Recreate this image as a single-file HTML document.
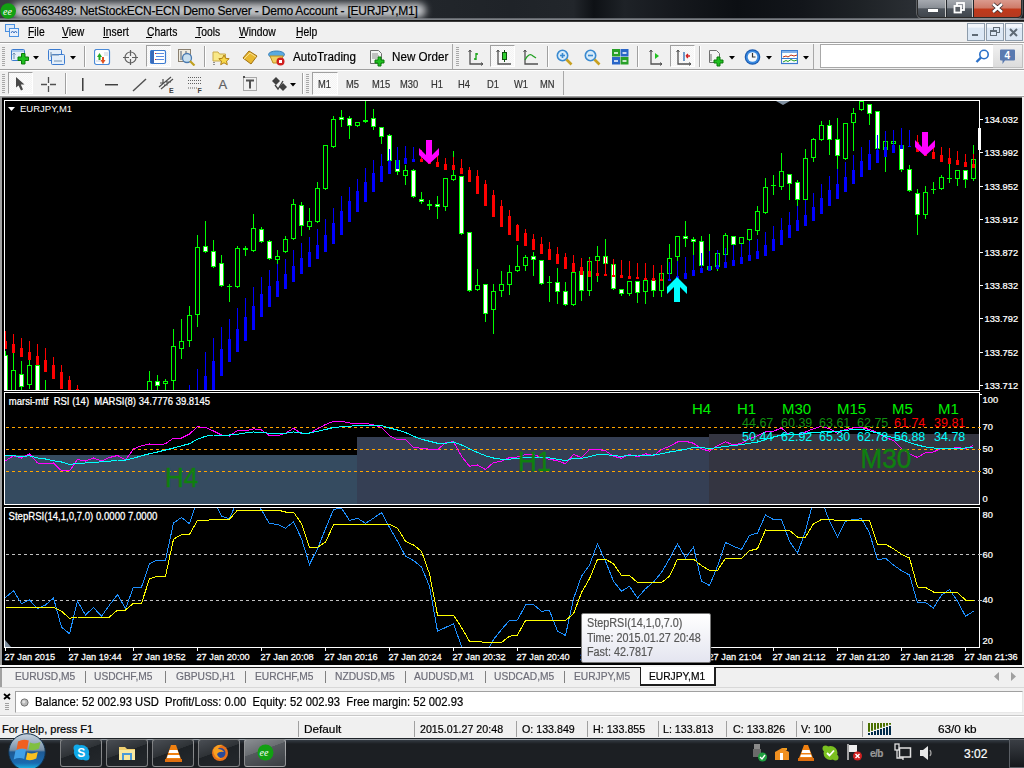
<!DOCTYPE html>
<html><head><meta charset="utf-8">
<style>
*{margin:0;padding:0;box-sizing:border-box}
html,body{width:1024px;height:768px;overflow:hidden;background:#f0f0f0;font-family:"Liberation Sans",sans-serif;font-size:12px;color:#000}
.a{position:absolute}
.t{position:absolute;white-space:pre;line-height:normal;-webkit-text-stroke:0.2px currentColor}
#title{left:0;top:0;width:1024px;height:21px;background:linear-gradient(90deg,#2a2d31 0%,#15181c 30%,#1c2026 60%,#2b2f35 75%,#15181c 90%,#1a1d22 100%)}

</style></head><body>
<div class="a" style="left:0;top:0;width:1024px;height:20px;background:linear-gradient(90deg,#3a3d42 0%,#2a2d32 20%,#22262b 41%,#1f2328 50%,#22262b 56%,#0e1115 58%,#1e2227 61%,#15181d 66%,#0c0f13 72%,#12151a 78%,#1e2226 84%,#2a2e33 89%,#1a1d22 100%)"></div>
<div class="a" style="left:12px;top:3px;width:414px;height:15px;background:rgba(205,207,210,0.92);border-radius:8px;filter:blur(3.5px)"></div>
<div class="a" style="left:0;top:18px;width:1024px;height:2px;background:linear-gradient(180deg,rgba(120,124,130,.6),rgba(150,154,160,.9))"></div>
<div class="a" style="left:0;top:20px;width:1024px;height:1px;background:#141414"></div>
<div class="a" style="left:0;top:21px;width:1024px;height:1px;background:#3a3a3a"></div>
<svg class="a" style="left:0;top:3px" width="17" height="17" viewBox="0 0 17 17"><circle cx="8.2" cy="8" r="7.8" fill="#12a012"/><text x="3" y="11.5" font-family="Liberation Serif" font-style="italic" font-size="10" fill="#fff">ee</text></svg>
<div class="t" style="left:21.6px;top:3.74px;font-size:12px;color:#000;letter-spacing:-0.2px">65063489: NetStockECN-ECN Demo Server - Demo Account - [EURJPY,M1]</div>
<div class="a" style="left:917px;top:-2px;width:105px;height:20px;border:1px solid #2a2a2a;border-radius:0 0 5px 5px;overflow:hidden;box-shadow:0 0 0 1px rgba(255,255,255,.25)"><div class="a" style="left:0;top:0;width:28px;height:19px;background:linear-gradient(180deg,#a9adb3 0%,#8a8f96 45%,#4e545c 52%,#3e434a 100%);border-right:1px solid #c8c8c8"></div><div class="a" style="left:29px;top:0;width:26px;height:19px;background:linear-gradient(180deg,#a9adb3 0%,#8a8f96 45%,#4e545c 52%,#3e434a 100%);border-right:1px solid #c8c8c8"></div><div class="a" style="left:56px;top:0;width:49px;height:19px;background:linear-gradient(180deg,#dc9e92 0%,#cf7c6a 45%,#c0391b 55%,#b23a22 100%)"></div></div>
<div class="a" style="left:928px;top:9px;width:10px;height:3px;background:#fff;box-shadow:0 0 1px #333"></div>
<svg class="a" style="left:953px;top:2px" width="13" height="12"><rect x="4" y="1" width="7" height="7" fill="none" stroke="#fff" stroke-width="1.8"/><rect x="1.5" y="4" width="6.5" height="6.5" fill="#5a5f66" stroke="#fff" stroke-width="1.8"/></svg>
<svg class="a" style="left:991px;top:2px" width="13" height="12"><path d="M2 2 L11 10 M11 2 L2 10" stroke="#3a2a2a" stroke-width="4"/><path d="M2 2 L11 10 M11 2 L2 10" stroke="#fff" stroke-width="2.4"/></svg>
<div class="a" style="left:0;top:22px;width:1024px;height:20px;background:#f0f0f0"></div>
<div class="a" style="left:0;top:42px;width:1024px;height:1px;background:#a0a0a0"></div>
<div class="a" style="left:0;top:43px;width:1024px;height:1px;background:#fff"></div>
<svg class="a" style="left:4px;top:23px" width="16" height="15"><rect x="1.5" y="1.5" width="9" height="7" fill="#dbe8f8" stroke="#4a90e0"/><rect x="5.5" y="5.5" width="9" height="8" fill="#e8f0fb" stroke="#4a90e0"/><path d="M7 10 l1.5 -2 l1.5 2 l1.5 -2 l1.5 2" stroke="#3a70c0" fill="none"/></svg>
<div class="t" style="left:28px;top:24.94px;font-size:12px;color:#000;transform:scaleX(0.86);transform-origin:0 0;">File</div>
<div class="a" style="left:28px;top:37px;width:6px;height:1px;background:#000"></div>
<div class="t" style="left:62px;top:24.94px;font-size:12px;color:#000;transform:scaleX(0.86);transform-origin:0 0;">View</div>
<div class="a" style="left:62px;top:37px;width:6px;height:1px;background:#000"></div>
<div class="t" style="left:103px;top:24.94px;font-size:12px;color:#000;transform:scaleX(0.86);transform-origin:0 0;">Insert</div>
<div class="a" style="left:103px;top:37px;width:6px;height:1px;background:#000"></div>
<div class="t" style="left:146.8px;top:24.94px;font-size:12px;color:#000;transform:scaleX(0.86);transform-origin:0 0;">Charts</div>
<div class="a" style="left:146px;top:37px;width:6px;height:1px;background:#000"></div>
<div class="t" style="left:195.7px;top:24.94px;font-size:12px;color:#000;transform:scaleX(0.86);transform-origin:0 0;">Tools</div>
<div class="a" style="left:195px;top:37px;width:6px;height:1px;background:#000"></div>
<div class="t" style="left:239.2px;top:24.94px;font-size:12px;color:#000;transform:scaleX(0.86);transform-origin:0 0;">Window</div>
<div class="a" style="left:239px;top:37px;width:6px;height:1px;background:#000"></div>
<div class="t" style="left:296.2px;top:24.94px;font-size:12px;color:#000;transform:scaleX(0.86);transform-origin:0 0;">Help</div>
<div class="a" style="left:296px;top:37px;width:6px;height:1px;background:#000"></div>
<div class="a" style="left:967px;top:23px;width:18px;height:18px;border:1px solid #8d9cab;background:linear-gradient(180deg,#f3f7fc 0%,#f3f7fc 20%,#dce8f5 25%,#dce8f5 100%)"></div>
<div class="a" style="left:986px;top:23px;width:18px;height:18px;border:1px solid #8d9cab;background:linear-gradient(180deg,#f3f7fc 0%,#f3f7fc 20%,#dce8f5 25%,#dce8f5 100%)"></div>
<div class="a" style="left:1005px;top:23px;width:18px;height:18px;border:1px solid #8d9cab;background:linear-gradient(180deg,#f3f7fc 0%,#f3f7fc 20%,#dce8f5 25%,#dce8f5 100%)"></div>
<div class="a" style="left:972px;top:34px;width:6px;height:2px;background:#5f6b76"></div>
<svg class="a" style="left:990px;top:27px" width="11" height="10"><rect x="3.5" y="0.5" width="6" height="5" fill="none" stroke="#5f6b76"/><rect x="0.5" y="3.5" width="6" height="5" fill="#dce8f5" stroke="#5f6b76"/><rect x="1" y="4" width="5" height="1" fill="#5f6b76"/></svg>
<svg class="a" style="left:1009px;top:28px" width="10" height="9"><path d="M1 1 L8 8 M8 1 L1 8" stroke="#5f6b76" stroke-width="2"/></svg>
<div class="a" style="left:0;top:44px;width:814px;height:25px;background:#f0f0f0;border-right:1px solid #a8a8a8"></div>
<div class="a" style="left:0;top:69px;width:1024px;height:1px;background:#a0a0a0"></div>
<div class="a" style="left:0;top:70px;width:1024px;height:1px;background:#fff"></div>
<div class="a" style="left:2px;top:47px;width:3px;height:1px;background:#a8a8a8"></div><div class="a" style="left:2px;top:49px;width:3px;height:1px;background:#a8a8a8"></div><div class="a" style="left:2px;top:51px;width:3px;height:1px;background:#a8a8a8"></div><div class="a" style="left:2px;top:53px;width:3px;height:1px;background:#a8a8a8"></div><div class="a" style="left:2px;top:55px;width:3px;height:1px;background:#a8a8a8"></div><div class="a" style="left:2px;top:57px;width:3px;height:1px;background:#a8a8a8"></div><div class="a" style="left:2px;top:59px;width:3px;height:1px;background:#a8a8a8"></div><div class="a" style="left:2px;top:61px;width:3px;height:1px;background:#a8a8a8"></div><div class="a" style="left:2px;top:63px;width:3px;height:1px;background:#a8a8a8"></div><div class="a" style="left:2px;top:65px;width:3px;height:1px;background:#a8a8a8"></div>
<svg class="a" style="left:10px;top:48px" width="20" height="18" viewBox="0 0 20 18"><rect x="1.5" y="1.5" width="13" height="11" rx="1" fill="#e4eef9" stroke="#3b7bd0"/><rect x="2" y="2" width="12" height="2" fill="#a8c8ee"/><path d="M4 5 v6 M2.5 6.5 l1.5 -1.5 l1.5 1.5" stroke="#7090b0" fill="none"/><path d="M11.5 5.5 h3.5 v3.5 h3.5 v3.5 h-3.5 v3.5 h-3.5 v-3.5 h-3.5 v-3.5 h3.5 z" fill="#20c020" stroke="#0a7a0a"/></svg>
<svg class="a" style="left:33px;top:56px" width="6" height="4"><path d="M0 0 H6 L3 3.5 Z" fill="#000"/></svg>
<svg class="a" style="left:47px;top:48px" width="20" height="18" viewBox="0 0 20 18"><rect x="1.5" y="1.5" width="13" height="11" rx="1" fill="#e4eef9" stroke="#3b7bd0"/><rect x="4.5" y="6.5" width="13" height="10" rx="1" fill="#e4eef9" stroke="#3b7bd0"/><path d="M4 4 v5 M4 7 h8 M7 13 h8" stroke="#7090b0" fill="none"/></svg>
<svg class="a" style="left:70px;top:56px" width="6" height="4"><path d="M0 0 H6 L3 3.5 Z" fill="#000"/></svg>
<div class="a" style="left:84px;top:46px;width:1px;height:21px;background:#a0a0a0"></div><div class="a" style="left:85px;top:46px;width:1px;height:21px;background:#fff"></div>
<svg class="a" style="left:94px;top:49px" width="17" height="17" viewBox="0 0 17 17"><rect x="0.5" y="0.5" width="15" height="15" rx="2" fill="#fff" stroke="#4a8ad8" stroke-width="1.2"/><path d="M3 8 l2.5 -4 l2.5 4 h-1.5 v3 h-2 v-3z" fill="#22aa22"/><path d="M8 8 h2 v3 h1.5 l-2.5 4 l-2.5 -4 h1.5z" fill="#e05020"/><path d="M10 4 h4 M10 6 h4 M2 12 h5" stroke="#c8d0dc"/></svg>
<svg class="a" style="left:122px;top:49px" width="17" height="17" viewBox="0 0 17 17"><circle cx="8.5" cy="8.5" r="5.5" fill="none" stroke="#606060" stroke-width="1.2"/><path d="M8.5 1 v6 M8.5 10 v6 M1 8.5 h6 M10 8.5 h6" stroke="#606060" stroke-width="1.2"/></svg>
<div class="a" style="left:146px;top:45px;width:25px;height:22px;border:1px solid;border-color:#a0a0a0 #fff #fff #a0a0a0;background:repeating-conic-gradient(#f4f4f4 0 25%,#fbfbfb 0 50%) 0 0/2px 2px"></div>
<svg class="a" style="left:150px;top:50px" width="17" height="15" viewBox="0 0 17 15"><rect x="0.5" y="0.5" width="15" height="13" rx="1.5" fill="#fff" stroke="#3a7ad0" stroke-width="1.2"/><rect x="1" y="1" width="3" height="12" fill="#3a6ab8"/><path d="M6 3.5 h8 M6 6.5 h8 M6 9.5 h8" stroke="#5a8ae0"/><rect x="5" y="3" width="1" height="1" fill="#e02020"/><rect x="5" y="9" width="1" height="1" fill="#e02020"/></svg>
<svg class="a" style="left:178px;top:49px" width="18" height="17" viewBox="0 0 18 17"><rect x="0.5" y="0.5" width="12" height="12" fill="#f0ece0" stroke="#8a8070"/><path d="M3 2 v9 M8 2 v9" stroke="#506070"/><circle cx="9" cy="9" r="4.5" fill="#c8e0f0" stroke="#4a7ab0" stroke-width="1.3"/><path d="M12 12 l4.5 4.5" stroke="#c0a020" stroke-width="2.2"/></svg>
<div class="a" style="left:204px;top:46px;width:1px;height:21px;background:#a0a0a0"></div><div class="a" style="left:205px;top:46px;width:1px;height:21px;background:#fff"></div>
<svg class="a" style="left:212px;top:49px" width="19" height="17" viewBox="0 0 19 17"><path d="M1 3 h5 l1.5 2 h6 v7 h-12.5z" fill="#f8e888" stroke="#c8a848"/><path d="M12 6 l1.6 3.3 3.6 .4 -2.7 2.4 .8 3.6 -3.3 -1.9 -3.3 1.9 .8 -3.6 -2.7 -2.4 3.6 -.4z" fill="#f8d848" stroke="#b08018"/><path d="M2 13 v3" stroke="#333" stroke-dasharray="1,1"/></svg>
<svg class="a" style="left:242px;top:50px" width="16" height="15" viewBox="0 0 16 15"><path d="M1 8 l6 -7 l8 5 l-6 8z" fill="#e8b830" stroke="#a07010"/><path d="M2 9 l6 -6 l6 4" fill="none" stroke="#f8e090"/></svg>
<svg class="a" style="left:268px;top:49px" width="18" height="17" viewBox="0 0 18 17"><ellipse cx="8.5" cy="5.5" rx="8" ry="3.5" fill="#5aaae0" stroke="#3a80b8"/><path d="M2 7 h13 l-3 7 h-7z" fill="#f0d060" stroke="#c09020"/><circle cx="12.5" cy="12.5" r="4" fill="#d02020"/><rect x="11" y="11" width="3" height="3" fill="#fff"/></svg>
<div class="t" style="left:292.5px;top:50.34px;font-size:12px;color:#000;transform:scaleX(0.97);transform-origin:0 0;">AutoTrading</div>
<svg class="a" style="left:369px;top:49px" width="18" height="18" viewBox="0 0 18 18"><path d="M1.5 1.5 h8 l3 3 v10 h-11z" fill="#f4f4f4" stroke="#707070"/><path d="M3 5 h6 M3 7 h7 M3 9 h5" stroke="#909090"/><path d="M9 8 h3 v3 h3 v3 h-3 v3 h-3 v-3 h-3 v-3 h3z" fill="#20c020" stroke="#0a7a0a"/></svg>
<div class="t" style="left:391.5px;top:50.04px;font-size:12px;color:#000;transform:scaleX(0.97);transform-origin:0 0;">New Order</div>
<div class="a" style="left:452px;top:44px;width:1px;height:25px;background:#a8a8a8"></div>
<div class="a" style="left:456px;top:47px;width:3px;height:1px;background:#a8a8a8"></div><div class="a" style="left:456px;top:49px;width:3px;height:1px;background:#a8a8a8"></div><div class="a" style="left:456px;top:51px;width:3px;height:1px;background:#a8a8a8"></div><div class="a" style="left:456px;top:53px;width:3px;height:1px;background:#a8a8a8"></div><div class="a" style="left:456px;top:55px;width:3px;height:1px;background:#a8a8a8"></div><div class="a" style="left:456px;top:57px;width:3px;height:1px;background:#a8a8a8"></div><div class="a" style="left:456px;top:59px;width:3px;height:1px;background:#a8a8a8"></div><div class="a" style="left:456px;top:61px;width:3px;height:1px;background:#a8a8a8"></div><div class="a" style="left:456px;top:63px;width:3px;height:1px;background:#a8a8a8"></div><div class="a" style="left:456px;top:65px;width:3px;height:1px;background:#a8a8a8"></div>
<svg class="a" style="left:467px;top:49px" width="17" height="17" viewBox="0 0 17 17"><path d="M3 1 v14 h13" stroke="#505050" stroke-width="1.3" fill="none"/><path d="M1.5 3 l1.5 -2 l1.5 2 M14 13.5 l2 1.5 l-2 1.5" stroke="#505050" fill="none"/><path d="M9 4 v7 M9 5 h2 M7 10 h2" stroke="#10a010" stroke-width="1.3"/></svg>
<div class="a" style="left:490px;top:45px;width:25px;height:22px;border:1px solid;border-color:#a0a0a0 #fff #fff #a0a0a0;background:repeating-conic-gradient(#f4f4f4 0 25%,#fbfbfb 0 50%) 0 0/2px 2px"></div>
<svg class="a" style="left:495px;top:49px" width="17" height="17" viewBox="0 0 17 17"><path d="M3 1 v14 h13" stroke="#505050" stroke-width="1.3" fill="none"/><path d="M1.5 3 l1.5 -2 l1.5 2" stroke="#505050" fill="none"/><path d="M9.5 1 v12" stroke="#105010"/><rect x="7.5" y="3.5" width="4" height="7" fill="#30d030" stroke="#105010"/></svg>
<svg class="a" style="left:522px;top:49px" width="17" height="17" viewBox="0 0 17 17"><path d="M3 1 v14 h13" stroke="#505050" stroke-width="1.3" fill="none"/><path d="M1.5 3 l1.5 -2 l1.5 2" stroke="#505050" fill="none"/><path d="M3 11 q4 -8 8 -4 l3 2" stroke="#20a020" stroke-width="1.3" fill="none"/></svg>
<div class="a" style="left:547px;top:46px;width:1px;height:21px;background:#a0a0a0"></div><div class="a" style="left:548px;top:46px;width:1px;height:21px;background:#fff"></div>
<svg class="a" style="left:556px;top:49px" width="17" height="17" viewBox="0 0 17 17"><circle cx="6.5" cy="6.5" r="5.2" fill="#d8ecfa" stroke="#3a8ad0" stroke-width="1.6"/><path d="M10.5 10.5 l5 5" stroke="#c8a020" stroke-width="2.6"/><path d="M4 6.5 h5" stroke="#3a8ad0" stroke-width="1.6"/><path d="M6.5 4 v5" stroke="#3a8ad0" stroke-width="1.6"/></svg>
<svg class="a" style="left:584px;top:49px" width="17" height="17" viewBox="0 0 17 17"><circle cx="6.5" cy="6.5" r="5.2" fill="#d8ecfa" stroke="#3a8ad0" stroke-width="1.6"/><path d="M10.5 10.5 l5 5" stroke="#c8a020" stroke-width="2.6"/><path d="M4 6.5 h5" stroke="#3a8ad0" stroke-width="1.6"/></svg>
<svg class="a" style="left:612px;top:49px" width="17" height="16" viewBox="0 0 17 16"><rect x="0" y="0" width="8" height="7.5" fill="#28a028"/><rect x="8.5" y="0" width="8" height="7.5" fill="#2a66c8"/><rect x="0" y="8" width="8" height="7.5" fill="#2a66c8"/><rect x="8.5" y="8" width="8" height="7.5" fill="#28a028"/><path d="M2 4 h4 M10.5 4 h4 M2 12 h4 M10.5 12 h4" stroke="#fff" stroke-width="1.5"/></svg>
<div class="a" style="left:637px;top:46px;width:1px;height:21px;background:#a0a0a0"></div><div class="a" style="left:638px;top:46px;width:1px;height:21px;background:#fff"></div>
<svg class="a" style="left:646px;top:49px" width="17" height="17" viewBox="0 0 17 17"><path d="M5 1 v14 h11" stroke="#505050" stroke-width="1.3" fill="none"/><path d="M3.5 3 l1.5 -2 l1.5 2 M14 13.5 l2 1.5 l-2 1.5" stroke="#505050" fill="none"/><path d="M9 4 v6 l4 -3z" fill="#20c020"/></svg>
<div class="a" style="left:670px;top:45px;width:25px;height:22px;border:1px solid;border-color:#a0a0a0 #fff #fff #a0a0a0;background:repeating-conic-gradient(#f4f4f4 0 25%,#fbfbfb 0 50%) 0 0/2px 2px"></div>
<svg class="a" style="left:675px;top:49px" width="17" height="17" viewBox="0 0 17 17"><path d="M3 1 v14 h13" stroke="#505050" stroke-width="1.3" fill="none"/><path d="M1.5 3 l1.5 -2 l1.5 2 M14 13.5 l2 1.5 l-2 1.5" stroke="#505050" fill="none"/><path d="M9 3 v9" stroke="#2a6ab0" stroke-width="1.3"/><path d="M15 7 h-4 M11 7 l2 -2 M11 7 l2 2" stroke="#d02020" stroke-width="1.3"/></svg>
<div class="a" style="left:699px;top:46px;width:1px;height:21px;background:#a0a0a0"></div><div class="a" style="left:700px;top:46px;width:1px;height:21px;background:#fff"></div>
<svg class="a" style="left:708px;top:49px" width="18" height="18" viewBox="0 0 18 18"><path d="M1.5 1.5 h7 l3 3 v9 h-10z" fill="#f4f4f4" stroke="#707070"/><path d="M3 5 v7" stroke="#707070"/><path d="M9 8 h3 v3 h3 v3 h-3 v3 h-3 v-3 h-3 v-3 h3z" fill="#20c020" stroke="#0a7a0a"/></svg>
<svg class="a" style="left:729px;top:56px" width="6" height="4"><path d="M0 0 H6 L3 3.5 Z" fill="#000"/></svg>
<svg class="a" style="left:744px;top:49px" width="18" height="17" viewBox="0 0 18 17"><circle cx="8.5" cy="8" r="7.8" fill="#1a5ab0"/><circle cx="8.5" cy="8" r="6.6" fill="#3a8ae0"/><circle cx="8.5" cy="8" r="4.8" fill="#f4f8fc"/><path d="M8.5 4 v4 h3" stroke="#333" stroke-width="1.2" fill="none"/></svg>
<svg class="a" style="left:766px;top:56px" width="6" height="4"><path d="M0 0 H6 L3 3.5 Z" fill="#000"/></svg>
<svg class="a" style="left:781px;top:50px" width="17" height="15" viewBox="0 0 17 15"><rect x="0.5" y="0.5" width="16" height="13" fill="#fff" stroke="#3a7ad0" stroke-width="1.2"/><rect x="1" y="1" width="15" height="2" fill="#80b0e8"/><path d="M2 7 l3 -1 l2 1 l3 -2 l3 1 l3 -1" stroke="#c03010" fill="none"/><path d="M1 8.5 h15" stroke="#3a7ad0"/><path d="M2 12 l3 -1.5 l2 1 l3 -2 l3 1.5 l3 -1" stroke="#20a020" fill="none"/></svg>
<svg class="a" style="left:803px;top:56px" width="6" height="4"><path d="M0 0 H6 L3 3.5 Z" fill="#000"/></svg>
<div class="a" style="left:820px;top:44px;width:174px;height:24px;border:1px solid #a8a8a8;background:#fff"></div>
<svg class="a" style="left:975px;top:49px" width="15" height="14" viewBox="0 0 15 14"><circle cx="9" cy="5.5" r="4.2" fill="none" stroke="#2a70c8" stroke-width="1.6"/><path d="M6 8.5 l-4.5 4.5" stroke="#2a70c8" stroke-width="2.4"/></svg>
<div class="a" style="left:993px;top:44px;width:30px;height:24px;border:1px solid #c0c0c0;border-left:0;background:linear-gradient(180deg,#f0f0f0,#dcdcdc)"></div>
<svg class="a" style="left:999px;top:49px" width="17" height="17" viewBox="0 0 17 17"><path d="M1 1.5 Q1 0.5 2 0.5 H15 Q16 0.5 16 1.5 V10.5 Q16 11.5 15 11.5 H6 L3.5 15 V11.5 H2 Q1 11.5 1 10.5z" fill="#5a7ab0"/><text x="5.5" y="10" font-family="Liberation Sans" font-weight="bold" font-size="10" fill="#fff">4</text></svg>
<div class="a" style="left:0;top:71px;width:564px;height:25px;background:#f0f0f0;border-right:1px solid #a8a8a8"></div>
<div class="a" style="left:0;top:95px;width:1024px;height:1px;background:#fcfcfc"></div>
<div class="a" style="left:2px;top:74px;width:3px;height:1px;background:#a8a8a8"></div><div class="a" style="left:2px;top:76px;width:3px;height:1px;background:#a8a8a8"></div><div class="a" style="left:2px;top:78px;width:3px;height:1px;background:#a8a8a8"></div><div class="a" style="left:2px;top:80px;width:3px;height:1px;background:#a8a8a8"></div><div class="a" style="left:2px;top:82px;width:3px;height:1px;background:#a8a8a8"></div><div class="a" style="left:2px;top:84px;width:3px;height:1px;background:#a8a8a8"></div><div class="a" style="left:2px;top:86px;width:3px;height:1px;background:#a8a8a8"></div><div class="a" style="left:2px;top:88px;width:3px;height:1px;background:#a8a8a8"></div><div class="a" style="left:2px;top:90px;width:3px;height:1px;background:#a8a8a8"></div><div class="a" style="left:2px;top:92px;width:3px;height:1px;background:#a8a8a8"></div>
<div class="a" style="left:8px;top:72px;width:25px;height:22px;border:1px solid;border-color:#a0a0a0 #fff #fff #a0a0a0;background:repeating-conic-gradient(#f4f4f4 0 25%,#fbfbfb 0 50%) 0 0/2px 2px"></div>
<svg class="a" style="left:15px;top:76px" width="11" height="16" viewBox="0 0 11 16"><path d="M1 1 L1 11.5 L3.5 9.5 L6 14.5 L8 13.5 L5.8 8.5 L9.5 8.5 Z" fill="#484848"/></svg>
<svg class="a" style="left:40px;top:76px" width="17" height="17" viewBox="0 0 17 17"><path d="M8.5 1 v6 M8.5 10 v6 M1 8.5 h6 M10 8.5 h6" stroke="#505050" stroke-width="1.3"/></svg>
<div class="a" style="left:65px;top:73px;width:1px;height:21px;background:#a0a0a0"></div><div class="a" style="left:66px;top:73px;width:1px;height:21px;background:#fff"></div>
<div class="a" style="left:82px;top:78px;width:1px;height:13px;background:#404040"></div><div class="a" style="left:83px;top:78px;width:1px;height:13px;background:#909090"></div>
<div class="a" style="left:105px;top:84px;width:13px;height:1px;background:#404040"></div><div class="a" style="left:105px;top:85px;width:13px;height:1px;background:#a0a0a0"></div>
<svg class="a" style="left:132px;top:78px" width="15" height="14" viewBox="0 0 15 14"><path d="M1 13 L14 1" stroke="#505050" stroke-width="1.4"/></svg>
<svg class="a" style="left:158px;top:76px" width="17" height="18" viewBox="0 0 17 18"><path d="M1 11 L13 1 M3 13 L15 3 M2 7 h3 v-4 M6 9 h3 v-4 M10 6 h3" stroke="#505050" stroke-width="1.2" fill="none"/><text x="11" y="17" font-family="Liberation Sans" font-weight="bold" font-size="7" fill="#404040">E</text></svg>
<svg class="a" style="left:187px;top:76px" width="17" height="18" viewBox="0 0 17 18"><path d="M1 1.5 h13 M1 4.5 h13 M1 7.5 h13 M1 12 h9" stroke="#606060" stroke-dasharray="1,1"/><text x="10.5" y="17" font-family="Liberation Sans" font-weight="bold" font-size="7" fill="#404040">F</text></svg>
<div class="t" style="left:218.5px;top:77.29px;font-size:13px;color:#606060;">A</div>
<svg class="a" style="left:243px;top:76px" width="15" height="16" viewBox="0 0 15 16"><rect x="0.5" y="1.5" width="13" height="13" fill="none" stroke="#606060" stroke-dasharray="1,1"/><path d="M3 4.5 h8 M7 4.5 v8" stroke="#505050" stroke-width="2"/><rect x="0" y="0" width="2" height="2" fill="#505050"/></svg>
<svg class="a" style="left:272px;top:76px" width="15" height="16" viewBox="0 0 15 16"><path d="M0 5 l4 -4 l4 4 l-4 4z M7 11 l4 -4 l4 4 l-4 4z" fill="#404040"/><path d="M3 9 l3 4 l5 -8" stroke="#404040" stroke-width="1.3" fill="none"/></svg>
<svg class="a" style="left:290px;top:83px" width="6" height="4"><path d="M0 0 H6 L3 3.5 Z" fill="#000"/></svg>
<div class="a" style="left:302px;top:73px;width:1px;height:21px;background:#a0a0a0"></div><div class="a" style="left:303px;top:73px;width:1px;height:21px;background:#fff"></div>
<div class="a" style="left:306px;top:74px;width:3px;height:1px;background:#a8a8a8"></div><div class="a" style="left:306px;top:76px;width:3px;height:1px;background:#a8a8a8"></div><div class="a" style="left:306px;top:78px;width:3px;height:1px;background:#a8a8a8"></div><div class="a" style="left:306px;top:80px;width:3px;height:1px;background:#a8a8a8"></div><div class="a" style="left:306px;top:82px;width:3px;height:1px;background:#a8a8a8"></div><div class="a" style="left:306px;top:84px;width:3px;height:1px;background:#a8a8a8"></div><div class="a" style="left:306px;top:86px;width:3px;height:1px;background:#a8a8a8"></div><div class="a" style="left:306px;top:88px;width:3px;height:1px;background:#a8a8a8"></div><div class="a" style="left:306px;top:90px;width:3px;height:1px;background:#a8a8a8"></div><div class="a" style="left:306px;top:92px;width:3px;height:1px;background:#a8a8a8"></div>
<div class="a" style="left:312px;top:72px;width:26px;height:23px;border:1px solid;border-color:#a0a0a0 #fff #fff #a0a0a0;background:repeating-conic-gradient(#f4f4f4 0 25%,#fbfbfb 0 50%) 0 0/2px 2px"></div>
<div class="t" style="left:317.5px;top:77.78px;font-size:11px;color:#333;transform:scaleX(0.85);transform-origin:0 0;">M1</div>
<div class="t" style="left:345.7px;top:77.78px;font-size:11px;color:#333;transform:scaleX(0.85);transform-origin:0 0;">M5</div>
<div class="t" style="left:371.6px;top:77.78px;font-size:11px;color:#333;transform:scaleX(0.85);transform-origin:0 0;">M15</div>
<div class="t" style="left:399.7px;top:77.78px;font-size:11px;color:#333;transform:scaleX(0.85);transform-origin:0 0;">M30</div>
<div class="t" style="left:431px;top:77.78px;font-size:11px;color:#333;transform:scaleX(0.85);transform-origin:0 0;">H1</div>
<div class="t" style="left:457.6px;top:77.78px;font-size:11px;color:#333;transform:scaleX(0.85);transform-origin:0 0;">H4</div>
<div class="t" style="left:486.6px;top:77.78px;font-size:11px;color:#333;transform:scaleX(0.85);transform-origin:0 0;">D1</div>
<div class="t" style="left:513.8px;top:77.78px;font-size:11px;color:#333;transform:scaleX(0.85);transform-origin:0 0;">W1</div>
<div class="t" style="left:540.4px;top:77.78px;font-size:11px;color:#333;transform:scaleX(0.85);transform-origin:0 0;">MN</div>
<svg class="a" style="left:0;top:0" width="1024" height="768" viewBox="0 0 1024 768" shape-rendering="crispEdges" font-family="Liberation Sans">
<rect x="0" y="96" width="1024" height="1" fill="#a0a0a0"/><rect x="0" y="97" width="1024" height="1" fill="#696969"/>
<rect x="2" y="98" width="1020" height="567" fill="#000"/>
<rect x="0" y="97" width="2" height="569" fill="#a0a0a0"/>
<rect x="1022" y="97" width="2" height="569" fill="#f0f0f0"/>
<defs><clipPath id="c1"><rect x="5" y="101" width="974" height="289"/></clipPath><clipPath id="c2"><rect x="5" y="393" width="974" height="111"/></clipPath><clipPath id="c3"><rect x="5" y="508" width="974" height="139"/></clipPath></defs>
<g clip-path="url(#c1)">
<rect x="5" y="351" width="1" height="40" fill="#00ff00"/>
<rect x="3" y="355" width="5" height="36" fill="#00ff00"/>
<rect x="4" y="356" width="3" height="34" fill="#fff"/>
<rect x="13" y="353" width="1" height="38" fill="#00ff00"/>
<rect x="11" y="370" width="5" height="21" fill="#00ff00"/>
<rect x="12" y="371" width="3" height="19" fill="#000"/>
<rect x="21" y="361" width="1" height="30" fill="#00ff00"/>
<rect x="19" y="374" width="5" height="13" fill="#00ff00"/>
<rect x="20" y="375" width="3" height="11" fill="#fff"/>
<rect x="29" y="360" width="1" height="29" fill="#00ff00"/>
<rect x="27" y="365" width="5" height="20" fill="#00ff00"/>
<rect x="28" y="366" width="3" height="18" fill="#000"/>
<rect x="37" y="365" width="1" height="26" fill="#00ff00"/>
<rect x="35" y="365" width="5" height="26" fill="#00ff00"/>
<rect x="36" y="366" width="3" height="24" fill="#fff"/>
<rect x="45" y="380" width="1" height="20" fill="#00ff00"/>
<rect x="43" y="392" width="5" height="8" fill="#00ff00"/>
<rect x="44" y="393" width="3" height="6" fill="#000"/>
<rect x="149" y="371" width="1" height="20" fill="#00ff00"/>
<rect x="147" y="381" width="5" height="10" fill="#00ff00"/>
<rect x="148" y="382" width="3" height="8" fill="#000"/>
<rect x="157" y="375" width="1" height="16" fill="#00ff00"/>
<rect x="155" y="381" width="5" height="5" fill="#00ff00"/>
<rect x="156" y="382" width="3" height="3" fill="#fff"/>
<rect x="165" y="379" width="1" height="12" fill="#00ff00"/>
<rect x="163" y="381" width="5" height="3" fill="#00ff00"/>
<rect x="164" y="382" width="3" height="1" fill="#000"/>
<rect x="173" y="329" width="1" height="62" fill="#00ff00"/>
<rect x="171" y="346" width="5" height="35" fill="#00ff00"/>
<rect x="172" y="347" width="3" height="33" fill="#000"/>
<rect x="181" y="319" width="1" height="40" fill="#00ff00"/>
<rect x="179" y="341" width="5" height="8" fill="#00ff00"/>
<rect x="180" y="342" width="3" height="6" fill="#000"/>
<rect x="189" y="306" width="1" height="41" fill="#00ff00"/>
<rect x="187" y="315" width="5" height="26" fill="#00ff00"/>
<rect x="188" y="316" width="3" height="24" fill="#000"/>
<rect x="197" y="235" width="1" height="92" fill="#00ff00"/>
<rect x="195" y="247" width="5" height="68" fill="#00ff00"/>
<rect x="196" y="248" width="3" height="66" fill="#000"/>
<rect x="205" y="221" width="1" height="32" fill="#00ff00"/>
<rect x="203" y="246" width="5" height="6" fill="#00ff00"/>
<rect x="204" y="247" width="3" height="4" fill="#fff"/>
<rect x="213" y="240" width="1" height="28" fill="#00ff00"/>
<rect x="211" y="251" width="5" height="16" fill="#00ff00"/>
<rect x="212" y="252" width="3" height="14" fill="#fff"/>
<rect x="221" y="255" width="1" height="32" fill="#00ff00"/>
<rect x="219" y="263" width="5" height="23" fill="#00ff00"/>
<rect x="220" y="264" width="3" height="21" fill="#fff"/>
<rect x="229" y="284" width="1" height="18" fill="#00ff00"/>
<rect x="227" y="286" width="5" height="1" fill="#00ff00"/>
<rect x="237" y="246" width="1" height="42" fill="#00ff00"/>
<rect x="235" y="248" width="5" height="39" fill="#00ff00"/>
<rect x="236" y="249" width="3" height="37" fill="#000"/>
<rect x="245" y="246" width="1" height="10" fill="#00ff00"/>
<rect x="243" y="248" width="5" height="2" fill="#00ff00"/>
<rect x="253" y="214" width="1" height="38" fill="#00ff00"/>
<rect x="251" y="228" width="5" height="23" fill="#00ff00"/>
<rect x="252" y="229" width="3" height="21" fill="#000"/>
<rect x="261" y="227" width="1" height="16" fill="#00ff00"/>
<rect x="259" y="229" width="5" height="13" fill="#00ff00"/>
<rect x="260" y="230" width="3" height="11" fill="#fff"/>
<rect x="269" y="240" width="1" height="20" fill="#00ff00"/>
<rect x="267" y="241" width="5" height="18" fill="#00ff00"/>
<rect x="268" y="242" width="3" height="16" fill="#fff"/>
<rect x="277" y="250" width="1" height="14" fill="#00ff00"/>
<rect x="275" y="256" width="5" height="4" fill="#00ff00"/>
<rect x="276" y="257" width="3" height="2" fill="#000"/>
<rect x="285" y="236" width="1" height="17" fill="#00ff00"/>
<rect x="283" y="239" width="5" height="13" fill="#00ff00"/>
<rect x="284" y="240" width="3" height="11" fill="#000"/>
<rect x="293" y="199" width="1" height="41" fill="#00ff00"/>
<rect x="291" y="204" width="5" height="35" fill="#00ff00"/>
<rect x="292" y="205" width="3" height="33" fill="#000"/>
<rect x="301" y="202" width="1" height="34" fill="#00ff00"/>
<rect x="299" y="205" width="5" height="21" fill="#00ff00"/>
<rect x="300" y="206" width="3" height="19" fill="#fff"/>
<rect x="309" y="208" width="1" height="22" fill="#00ff00"/>
<rect x="307" y="221" width="5" height="6" fill="#00ff00"/>
<rect x="308" y="222" width="3" height="4" fill="#000"/>
<rect x="317" y="182" width="1" height="41" fill="#00ff00"/>
<rect x="315" y="188" width="5" height="34" fill="#00ff00"/>
<rect x="316" y="189" width="3" height="32" fill="#000"/>
<rect x="325" y="145" width="1" height="45" fill="#00ff00"/>
<rect x="323" y="145" width="5" height="44" fill="#00ff00"/>
<rect x="324" y="146" width="3" height="42" fill="#000"/>
<rect x="333" y="116" width="1" height="32" fill="#00ff00"/>
<rect x="331" y="119" width="5" height="28" fill="#00ff00"/>
<rect x="332" y="120" width="3" height="26" fill="#000"/>
<rect x="341" y="110" width="1" height="17" fill="#00ff00"/>
<rect x="339" y="117" width="5" height="3" fill="#00ff00"/>
<rect x="340" y="118" width="3" height="1" fill="#fff"/>
<rect x="349" y="116" width="1" height="23" fill="#00ff00"/>
<rect x="347" y="118" width="5" height="8" fill="#00ff00"/>
<rect x="348" y="119" width="3" height="6" fill="#fff"/>
<rect x="357" y="122" width="1" height="5" fill="#00ff00"/>
<rect x="355" y="122" width="5" height="4" fill="#00ff00"/>
<rect x="356" y="123" width="3" height="2" fill="#000"/>
<rect x="365" y="101" width="1" height="22" fill="#00ff00"/>
<rect x="363" y="120" width="5" height="2" fill="#00ff00"/>
<rect x="373" y="109" width="1" height="21" fill="#00ff00"/>
<rect x="371" y="118" width="5" height="9" fill="#00ff00"/>
<rect x="372" y="119" width="3" height="7" fill="#fff"/>
<rect x="381" y="127" width="1" height="17" fill="#00ff00"/>
<rect x="379" y="127" width="5" height="10" fill="#00ff00"/>
<rect x="380" y="128" width="3" height="8" fill="#fff"/>
<rect x="389" y="134" width="1" height="28" fill="#00ff00"/>
<rect x="387" y="135" width="5" height="26" fill="#00ff00"/>
<rect x="388" y="136" width="3" height="24" fill="#fff"/>
<rect x="397" y="160" width="1" height="15" fill="#00ff00"/>
<rect x="395" y="160" width="5" height="12" fill="#00ff00"/>
<rect x="396" y="161" width="3" height="10" fill="#fff"/>
<rect x="405" y="165" width="1" height="20" fill="#00ff00"/>
<rect x="403" y="170" width="5" height="6" fill="#00ff00"/>
<rect x="404" y="171" width="3" height="4" fill="#000"/>
<rect x="413" y="169" width="1" height="29" fill="#00ff00"/>
<rect x="411" y="170" width="5" height="27" fill="#00ff00"/>
<rect x="412" y="171" width="3" height="25" fill="#fff"/>
<rect x="421" y="192" width="1" height="12" fill="#00ff00"/>
<rect x="419" y="199" width="5" height="3" fill="#00ff00"/>
<rect x="420" y="200" width="3" height="1" fill="#fff"/>
<rect x="429" y="200" width="1" height="10" fill="#00ff00"/>
<rect x="427" y="204" width="5" height="2" fill="#00ff00"/>
<rect x="437" y="196" width="1" height="23" fill="#00ff00"/>
<rect x="435" y="204" width="5" height="3" fill="#00ff00"/>
<rect x="436" y="205" width="3" height="1" fill="#fff"/>
<rect x="445" y="178" width="1" height="33" fill="#00ff00"/>
<rect x="443" y="178" width="5" height="29" fill="#00ff00"/>
<rect x="444" y="179" width="3" height="27" fill="#000"/>
<rect x="453" y="151" width="1" height="30" fill="#00ff00"/>
<rect x="451" y="175" width="5" height="5" fill="#00ff00"/>
<rect x="452" y="176" width="3" height="3" fill="#000"/>
<rect x="461" y="176" width="1" height="59" fill="#00ff00"/>
<rect x="459" y="176" width="5" height="58" fill="#00ff00"/>
<rect x="460" y="177" width="3" height="56" fill="#fff"/>
<rect x="469" y="232" width="1" height="60" fill="#00ff00"/>
<rect x="467" y="232" width="5" height="59" fill="#00ff00"/>
<rect x="468" y="233" width="3" height="57" fill="#fff"/>
<rect x="477" y="269" width="1" height="22" fill="#00ff00"/>
<rect x="475" y="285" width="5" height="5" fill="#00ff00"/>
<rect x="476" y="286" width="3" height="3" fill="#000"/>
<rect x="485" y="284" width="1" height="38" fill="#00ff00"/>
<rect x="483" y="284" width="5" height="30" fill="#00ff00"/>
<rect x="484" y="285" width="3" height="28" fill="#fff"/>
<rect x="493" y="284" width="1" height="50" fill="#00ff00"/>
<rect x="491" y="291" width="5" height="19" fill="#00ff00"/>
<rect x="492" y="292" width="3" height="17" fill="#000"/>
<rect x="501" y="271" width="1" height="26" fill="#00ff00"/>
<rect x="499" y="284" width="5" height="7" fill="#00ff00"/>
<rect x="500" y="285" width="3" height="5" fill="#000"/>
<rect x="509" y="265" width="1" height="30" fill="#00ff00"/>
<rect x="507" y="272" width="5" height="13" fill="#00ff00"/>
<rect x="508" y="273" width="3" height="11" fill="#000"/>
<rect x="517" y="245" width="1" height="27" fill="#00ff00"/>
<rect x="515" y="266" width="5" height="5" fill="#00ff00"/>
<rect x="516" y="267" width="3" height="3" fill="#000"/>
<rect x="525" y="255" width="1" height="16" fill="#00ff00"/>
<rect x="523" y="257" width="5" height="9" fill="#00ff00"/>
<rect x="524" y="258" width="3" height="7" fill="#000"/>
<rect x="533" y="252" width="1" height="24" fill="#00ff00"/>
<rect x="531" y="256" width="5" height="4" fill="#00ff00"/>
<rect x="532" y="257" width="3" height="2" fill="#fff"/>
<rect x="541" y="260" width="1" height="25" fill="#00ff00"/>
<rect x="539" y="260" width="5" height="24" fill="#00ff00"/>
<rect x="540" y="261" width="3" height="22" fill="#fff"/>
<rect x="549" y="276" width="1" height="26" fill="#00ff00"/>
<rect x="547" y="282" width="5" height="1" fill="#00ff00"/>
<rect x="557" y="268" width="1" height="36" fill="#00ff00"/>
<rect x="555" y="282" width="5" height="10" fill="#00ff00"/>
<rect x="556" y="283" width="3" height="8" fill="#fff"/>
<rect x="565" y="282" width="1" height="24" fill="#00ff00"/>
<rect x="563" y="291" width="5" height="14" fill="#00ff00"/>
<rect x="564" y="292" width="3" height="12" fill="#fff"/>
<rect x="573" y="255" width="1" height="51" fill="#00ff00"/>
<rect x="571" y="272" width="5" height="33" fill="#00ff00"/>
<rect x="572" y="273" width="3" height="31" fill="#000"/>
<rect x="581" y="258" width="1" height="43" fill="#00ff00"/>
<rect x="579" y="271" width="5" height="20" fill="#00ff00"/>
<rect x="580" y="272" width="3" height="18" fill="#fff"/>
<rect x="589" y="257" width="1" height="39" fill="#00ff00"/>
<rect x="587" y="261" width="5" height="30" fill="#00ff00"/>
<rect x="588" y="262" width="3" height="28" fill="#000"/>
<rect x="597" y="246" width="1" height="36" fill="#00ff00"/>
<rect x="595" y="256" width="5" height="5" fill="#00ff00"/>
<rect x="596" y="257" width="3" height="3" fill="#000"/>
<rect x="605" y="239" width="1" height="26" fill="#00ff00"/>
<rect x="603" y="256" width="5" height="8" fill="#00ff00"/>
<rect x="604" y="257" width="3" height="6" fill="#fff"/>
<rect x="613" y="264" width="1" height="26" fill="#00ff00"/>
<rect x="611" y="264" width="5" height="25" fill="#00ff00"/>
<rect x="612" y="265" width="3" height="23" fill="#fff"/>
<rect x="621" y="289" width="1" height="7" fill="#00ff00"/>
<rect x="619" y="289" width="5" height="5" fill="#00ff00"/>
<rect x="620" y="290" width="3" height="3" fill="#fff"/>
<rect x="629" y="281" width="1" height="15" fill="#00ff00"/>
<rect x="627" y="281" width="5" height="13" fill="#00ff00"/>
<rect x="628" y="282" width="3" height="11" fill="#000"/>
<rect x="637" y="281" width="1" height="22" fill="#00ff00"/>
<rect x="635" y="281" width="5" height="12" fill="#00ff00"/>
<rect x="636" y="282" width="3" height="10" fill="#fff"/>
<rect x="645" y="280" width="1" height="24" fill="#00ff00"/>
<rect x="643" y="280" width="5" height="12" fill="#00ff00"/>
<rect x="644" y="281" width="3" height="10" fill="#000"/>
<rect x="653" y="280" width="1" height="17" fill="#00ff00"/>
<rect x="651" y="280" width="5" height="11" fill="#00ff00"/>
<rect x="652" y="281" width="3" height="9" fill="#fff"/>
<rect x="661" y="273" width="1" height="24" fill="#00ff00"/>
<rect x="659" y="273" width="5" height="18" fill="#00ff00"/>
<rect x="660" y="274" width="3" height="16" fill="#000"/>
<rect x="669" y="244" width="1" height="31" fill="#00ff00"/>
<rect x="667" y="258" width="5" height="16" fill="#00ff00"/>
<rect x="668" y="259" width="3" height="14" fill="#000"/>
<rect x="677" y="236" width="1" height="26" fill="#00ff00"/>
<rect x="675" y="236" width="5" height="21" fill="#00ff00"/>
<rect x="676" y="237" width="3" height="19" fill="#000"/>
<rect x="685" y="221" width="1" height="26" fill="#00ff00"/>
<rect x="683" y="236" width="5" height="3" fill="#00ff00"/>
<rect x="684" y="237" width="3" height="1" fill="#fff"/>
<rect x="693" y="237" width="1" height="18" fill="#00ff00"/>
<rect x="691" y="239" width="5" height="3" fill="#00ff00"/>
<rect x="692" y="240" width="3" height="1" fill="#fff"/>
<rect x="701" y="236" width="1" height="31" fill="#00ff00"/>
<rect x="699" y="241" width="5" height="25" fill="#00ff00"/>
<rect x="700" y="242" width="3" height="23" fill="#fff"/>
<rect x="709" y="234" width="1" height="37" fill="#00ff00"/>
<rect x="707" y="266" width="5" height="4" fill="#00ff00"/>
<rect x="708" y="267" width="3" height="2" fill="#000"/>
<rect x="717" y="250" width="1" height="21" fill="#00ff00"/>
<rect x="715" y="253" width="5" height="14" fill="#00ff00"/>
<rect x="716" y="254" width="3" height="12" fill="#000"/>
<rect x="725" y="233" width="1" height="23" fill="#00ff00"/>
<rect x="723" y="235" width="5" height="20" fill="#00ff00"/>
<rect x="724" y="236" width="3" height="18" fill="#000"/>
<rect x="733" y="236" width="1" height="10" fill="#00ff00"/>
<rect x="731" y="236" width="5" height="9" fill="#00ff00"/>
<rect x="732" y="237" width="3" height="7" fill="#fff"/>
<rect x="741" y="237" width="1" height="8" fill="#00ff00"/>
<rect x="739" y="237" width="5" height="7" fill="#00ff00"/>
<rect x="740" y="238" width="3" height="5" fill="#000"/>
<rect x="749" y="229" width="1" height="13" fill="#00ff00"/>
<rect x="747" y="229" width="5" height="11" fill="#00ff00"/>
<rect x="748" y="230" width="3" height="9" fill="#000"/>
<rect x="757" y="206" width="1" height="29" fill="#00ff00"/>
<rect x="755" y="211" width="5" height="20" fill="#00ff00"/>
<rect x="756" y="212" width="3" height="18" fill="#000"/>
<rect x="765" y="178" width="1" height="36" fill="#00ff00"/>
<rect x="763" y="187" width="5" height="26" fill="#00ff00"/>
<rect x="764" y="188" width="3" height="24" fill="#000"/>
<rect x="773" y="175" width="1" height="20" fill="#00ff00"/>
<rect x="771" y="185" width="5" height="1" fill="#00ff00"/>
<rect x="781" y="153" width="1" height="37" fill="#00ff00"/>
<rect x="779" y="171" width="5" height="16" fill="#00ff00"/>
<rect x="780" y="172" width="3" height="14" fill="#000"/>
<rect x="789" y="174" width="1" height="26" fill="#00ff00"/>
<rect x="787" y="174" width="5" height="10" fill="#00ff00"/>
<rect x="788" y="175" width="3" height="8" fill="#fff"/>
<rect x="797" y="180" width="1" height="26" fill="#00ff00"/>
<rect x="795" y="182" width="5" height="18" fill="#00ff00"/>
<rect x="796" y="183" width="3" height="16" fill="#fff"/>
<rect x="805" y="149" width="1" height="52" fill="#00ff00"/>
<rect x="803" y="158" width="5" height="42" fill="#00ff00"/>
<rect x="804" y="159" width="3" height="40" fill="#000"/>
<rect x="813" y="138" width="1" height="24" fill="#00ff00"/>
<rect x="811" y="139" width="5" height="19" fill="#00ff00"/>
<rect x="812" y="140" width="3" height="17" fill="#000"/>
<rect x="821" y="121" width="1" height="20" fill="#00ff00"/>
<rect x="819" y="125" width="5" height="15" fill="#00ff00"/>
<rect x="820" y="126" width="3" height="13" fill="#000"/>
<rect x="829" y="120" width="1" height="35" fill="#00ff00"/>
<rect x="827" y="125" width="5" height="15" fill="#00ff00"/>
<rect x="828" y="126" width="3" height="13" fill="#fff"/>
<rect x="837" y="118" width="1" height="51" fill="#00ff00"/>
<rect x="835" y="139" width="5" height="17" fill="#00ff00"/>
<rect x="836" y="140" width="3" height="15" fill="#fff"/>
<rect x="845" y="123" width="1" height="37" fill="#00ff00"/>
<rect x="843" y="123" width="5" height="36" fill="#00ff00"/>
<rect x="844" y="124" width="3" height="34" fill="#000"/>
<rect x="853" y="108" width="1" height="43" fill="#00ff00"/>
<rect x="851" y="113" width="5" height="10" fill="#00ff00"/>
<rect x="852" y="114" width="3" height="8" fill="#000"/>
<rect x="861" y="100" width="1" height="11" fill="#00ff00"/>
<rect x="859" y="101" width="5" height="9" fill="#00ff00"/>
<rect x="860" y="102" width="3" height="7" fill="#000"/>
<rect x="869" y="104" width="1" height="21" fill="#00ff00"/>
<rect x="867" y="104" width="5" height="10" fill="#00ff00"/>
<rect x="868" y="105" width="3" height="8" fill="#fff"/>
<rect x="877" y="111" width="1" height="39" fill="#00ff00"/>
<rect x="875" y="111" width="5" height="38" fill="#00ff00"/>
<rect x="876" y="112" width="3" height="36" fill="#fff"/>
<rect x="885" y="131" width="1" height="41" fill="#00ff00"/>
<rect x="883" y="141" width="5" height="9" fill="#00ff00"/>
<rect x="884" y="142" width="3" height="7" fill="#000"/>
<rect x="893" y="141" width="1" height="12" fill="#00ff00"/>
<rect x="891" y="141" width="5" height="3" fill="#00ff00"/>
<rect x="892" y="142" width="3" height="1" fill="#000"/>
<rect x="901" y="145" width="1" height="27" fill="#00ff00"/>
<rect x="899" y="145" width="5" height="25" fill="#00ff00"/>
<rect x="900" y="146" width="3" height="23" fill="#fff"/>
<rect x="909" y="165" width="1" height="27" fill="#00ff00"/>
<rect x="907" y="169" width="5" height="22" fill="#00ff00"/>
<rect x="908" y="170" width="3" height="20" fill="#fff"/>
<rect x="917" y="189" width="1" height="46" fill="#00ff00"/>
<rect x="915" y="193" width="5" height="22" fill="#00ff00"/>
<rect x="916" y="194" width="3" height="20" fill="#fff"/>
<rect x="925" y="186" width="1" height="33" fill="#00ff00"/>
<rect x="923" y="192" width="5" height="23" fill="#00ff00"/>
<rect x="924" y="193" width="3" height="21" fill="#000"/>
<rect x="933" y="182" width="1" height="12" fill="#00ff00"/>
<rect x="931" y="189" width="5" height="1" fill="#00ff00"/>
<rect x="941" y="175" width="1" height="15" fill="#00ff00"/>
<rect x="939" y="177" width="5" height="12" fill="#00ff00"/>
<rect x="940" y="178" width="3" height="10" fill="#000"/>
<rect x="949" y="164" width="1" height="19" fill="#00ff00"/>
<rect x="947" y="178" width="5" height="1" fill="#00ff00"/>
<rect x="957" y="170" width="1" height="16" fill="#00ff00"/>
<rect x="955" y="170" width="5" height="9" fill="#00ff00"/>
<rect x="956" y="171" width="3" height="7" fill="#000"/>
<rect x="965" y="170" width="1" height="18" fill="#00ff00"/>
<rect x="963" y="170" width="5" height="10" fill="#00ff00"/>
<rect x="964" y="171" width="3" height="8" fill="#fff"/>
<rect x="973" y="145" width="1" height="36" fill="#00ff00"/>
<rect x="971" y="159" width="5" height="20" fill="#00ff00"/>
<rect x="972" y="160" width="3" height="18" fill="#000"/>
<rect x="5" y="331" width="1" height="18" fill="#ff0000"/>
<rect x="4" y="341" width="3" height="8" fill="#ff0000"/>
<rect x="13" y="334" width="1" height="19" fill="#ff0000"/>
<rect x="12" y="344" width="3" height="9" fill="#ff0000"/>
<rect x="21" y="338" width="1" height="19" fill="#ff0000"/>
<rect x="20" y="348" width="3" height="9" fill="#ff0000"/>
<rect x="29" y="341" width="1" height="19" fill="#ff0000"/>
<rect x="28" y="352" width="3" height="8" fill="#ff0000"/>
<rect x="37" y="344" width="1" height="21" fill="#ff0000"/>
<rect x="36" y="356" width="3" height="9" fill="#ff0000"/>
<rect x="45" y="348" width="1" height="24" fill="#ff0000"/>
<rect x="44" y="360" width="3" height="12" fill="#ff0000"/>
<rect x="53" y="357" width="1" height="22" fill="#ff0000"/>
<rect x="52" y="365" width="3" height="14" fill="#ff0000"/>
<rect x="61" y="365" width="1" height="24" fill="#ff0000"/>
<rect x="60" y="372" width="3" height="17" fill="#ff0000"/>
<rect x="69" y="376" width="1" height="15" fill="#ff0000"/>
<rect x="68" y="380" width="3" height="11" fill="#ff0000"/>
<rect x="77" y="385" width="1" height="6" fill="#ff0000"/>
<rect x="76" y="389" width="3" height="2" fill="#ff0000"/>
<rect x="189" y="385" width="1" height="6" fill="#0000ff"/>
<rect x="188" y="391" width="3" height="1" fill="#0000ff"/>
<rect x="197" y="369" width="1" height="22" fill="#0000ff"/>
<rect x="196" y="391" width="3" height="1" fill="#0000ff"/>
<rect x="205" y="352" width="1" height="39" fill="#0000ff"/>
<rect x="204" y="376" width="3" height="15" fill="#0000ff"/>
<rect x="213" y="338" width="1" height="53" fill="#0000ff"/>
<rect x="212" y="361" width="3" height="30" fill="#0000ff"/>
<rect x="221" y="327" width="1" height="49" fill="#0000ff"/>
<rect x="220" y="349" width="3" height="27" fill="#0000ff"/>
<rect x="229" y="319" width="1" height="43" fill="#0000ff"/>
<rect x="228" y="339" width="3" height="23" fill="#0000ff"/>
<rect x="237" y="308" width="1" height="44" fill="#0000ff"/>
<rect x="236" y="329" width="3" height="23" fill="#0000ff"/>
<rect x="245" y="298" width="1" height="43" fill="#0000ff"/>
<rect x="244" y="317" width="3" height="24" fill="#0000ff"/>
<rect x="253" y="287" width="1" height="43" fill="#0000ff"/>
<rect x="252" y="306" width="3" height="24" fill="#0000ff"/>
<rect x="261" y="277" width="1" height="40" fill="#0000ff"/>
<rect x="260" y="294" width="3" height="23" fill="#0000ff"/>
<rect x="269" y="270" width="1" height="37" fill="#0000ff"/>
<rect x="268" y="286" width="3" height="21" fill="#0000ff"/>
<rect x="277" y="264" width="1" height="33" fill="#0000ff"/>
<rect x="276" y="281" width="3" height="16" fill="#0000ff"/>
<rect x="285" y="259" width="1" height="30" fill="#0000ff"/>
<rect x="284" y="274" width="3" height="15" fill="#0000ff"/>
<rect x="293" y="250" width="1" height="32" fill="#0000ff"/>
<rect x="292" y="266" width="3" height="16" fill="#0000ff"/>
<rect x="301" y="243" width="1" height="31" fill="#0000ff"/>
<rect x="300" y="258" width="3" height="16" fill="#0000ff"/>
<rect x="309" y="237" width="1" height="30" fill="#0000ff"/>
<rect x="308" y="252" width="3" height="15" fill="#0000ff"/>
<rect x="317" y="229" width="1" height="30" fill="#0000ff"/>
<rect x="316" y="245" width="3" height="14" fill="#0000ff"/>
<rect x="325" y="219" width="1" height="33" fill="#0000ff"/>
<rect x="324" y="235" width="3" height="17" fill="#0000ff"/>
<rect x="333" y="208" width="1" height="36" fill="#0000ff"/>
<rect x="332" y="223" width="3" height="21" fill="#0000ff"/>
<rect x="341" y="196" width="1" height="39" fill="#0000ff"/>
<rect x="340" y="211" width="3" height="24" fill="#0000ff"/>
<rect x="349" y="187" width="1" height="35" fill="#0000ff"/>
<rect x="348" y="201" width="3" height="21" fill="#0000ff"/>
<rect x="357" y="179" width="1" height="33" fill="#0000ff"/>
<rect x="356" y="191" width="3" height="21" fill="#0000ff"/>
<rect x="365" y="168" width="1" height="34" fill="#0000ff"/>
<rect x="364" y="182" width="3" height="20" fill="#0000ff"/>
<rect x="373" y="160" width="1" height="32" fill="#0000ff"/>
<rect x="372" y="173" width="3" height="19" fill="#0000ff"/>
<rect x="381" y="154" width="1" height="28" fill="#0000ff"/>
<rect x="380" y="166" width="3" height="16" fill="#0000ff"/>
<rect x="389" y="149" width="1" height="25" fill="#0000ff"/>
<rect x="388" y="161" width="3" height="13" fill="#0000ff"/>
<rect x="397" y="147" width="1" height="22" fill="#0000ff"/>
<rect x="396" y="160" width="3" height="9" fill="#0000ff"/>
<rect x="405" y="146" width="1" height="18" fill="#0000ff"/>
<rect x="404" y="158" width="3" height="6" fill="#0000ff"/>
<rect x="413" y="147" width="1" height="15" fill="#0000ff"/>
<rect x="412" y="159" width="3" height="3" fill="#0000ff"/>
<rect x="421" y="150" width="1" height="12" fill="#ff0000"/>
<rect x="420" y="159" width="3" height="3" fill="#ff0000"/>
<rect x="429" y="152" width="1" height="12" fill="#ff0000"/>
<rect x="428" y="161" width="3" height="3" fill="#ff0000"/>
<rect x="437" y="156" width="1" height="11" fill="#ff0000"/>
<rect x="436" y="162" width="3" height="5" fill="#ff0000"/>
<rect x="445" y="158" width="1" height="12" fill="#ff0000"/>
<rect x="444" y="164" width="3" height="6" fill="#ff0000"/>
<rect x="453" y="157" width="1" height="13" fill="#ff0000"/>
<rect x="452" y="165" width="3" height="5" fill="#ff0000"/>
<rect x="461" y="159" width="1" height="15" fill="#ff0000"/>
<rect x="460" y="168" width="3" height="6" fill="#ff0000"/>
<rect x="469" y="167" width="1" height="15" fill="#ff0000"/>
<rect x="468" y="170" width="3" height="12" fill="#ff0000"/>
<rect x="477" y="170" width="1" height="24" fill="#ff0000"/>
<rect x="476" y="176" width="3" height="18" fill="#ff0000"/>
<rect x="485" y="180" width="1" height="26" fill="#ff0000"/>
<rect x="484" y="184" width="3" height="22" fill="#ff0000"/>
<rect x="493" y="190" width="1" height="27" fill="#ff0000"/>
<rect x="492" y="195" width="3" height="22" fill="#ff0000"/>
<rect x="501" y="200" width="1" height="27" fill="#ff0000"/>
<rect x="500" y="206" width="3" height="21" fill="#ff0000"/>
<rect x="509" y="210" width="1" height="25" fill="#ff0000"/>
<rect x="508" y="216" width="3" height="19" fill="#ff0000"/>
<rect x="517" y="224" width="1" height="17" fill="#ff0000"/>
<rect x="516" y="225" width="3" height="16" fill="#ff0000"/>
<rect x="525" y="229" width="1" height="17" fill="#ff0000"/>
<rect x="524" y="233" width="3" height="13" fill="#ff0000"/>
<rect x="533" y="234" width="1" height="16" fill="#ff0000"/>
<rect x="532" y="239" width="3" height="11" fill="#ff0000"/>
<rect x="541" y="237" width="1" height="17" fill="#ff0000"/>
<rect x="540" y="244" width="3" height="10" fill="#ff0000"/>
<rect x="549" y="242" width="1" height="18" fill="#ff0000"/>
<rect x="548" y="249" width="3" height="11" fill="#ff0000"/>
<rect x="557" y="247" width="1" height="17" fill="#ff0000"/>
<rect x="556" y="254" width="3" height="10" fill="#ff0000"/>
<rect x="565" y="253" width="1" height="16" fill="#ff0000"/>
<rect x="564" y="257" width="3" height="12" fill="#ff0000"/>
<rect x="573" y="255" width="1" height="17" fill="#ff0000"/>
<rect x="572" y="263" width="3" height="9" fill="#ff0000"/>
<rect x="581" y="258" width="1" height="17" fill="#ff0000"/>
<rect x="580" y="267" width="3" height="8" fill="#ff0000"/>
<rect x="589" y="259" width="1" height="18" fill="#ff0000"/>
<rect x="588" y="271" width="3" height="6" fill="#ff0000"/>
<rect x="597" y="260" width="1" height="16" fill="#ff0000"/>
<rect x="596" y="273" width="3" height="3" fill="#ff0000"/>
<rect x="605" y="257" width="1" height="19" fill="#ff0000"/>
<rect x="604" y="274" width="3" height="2" fill="#ff0000"/>
<rect x="613" y="259" width="1" height="18" fill="#ff0000"/>
<rect x="612" y="275" width="3" height="2" fill="#ff0000"/>
<rect x="621" y="260" width="1" height="18" fill="#ff0000"/>
<rect x="620" y="275" width="3" height="3" fill="#ff0000"/>
<rect x="629" y="261" width="1" height="18" fill="#ff0000"/>
<rect x="628" y="276" width="3" height="3" fill="#ff0000"/>
<rect x="637" y="263" width="1" height="16" fill="#ff0000"/>
<rect x="636" y="277" width="3" height="2" fill="#ff0000"/>
<rect x="645" y="263" width="1" height="17" fill="#ff0000"/>
<rect x="644" y="278" width="3" height="2" fill="#ff0000"/>
<rect x="653" y="265" width="1" height="16" fill="#ff0000"/>
<rect x="652" y="278" width="3" height="3" fill="#ff0000"/>
<rect x="661" y="265" width="1" height="16" fill="#ff0000"/>
<rect x="660" y="279" width="3" height="2" fill="#ff0000"/>
<rect x="669" y="262" width="1" height="19" fill="#0000ff"/>
<rect x="668" y="279" width="3" height="2" fill="#0000ff"/>
<rect x="677" y="261" width="1" height="18" fill="#0000ff"/>
<rect x="676" y="276" width="3" height="3" fill="#0000ff"/>
<rect x="685" y="257" width="1" height="22" fill="#0000ff"/>
<rect x="684" y="273" width="3" height="6" fill="#0000ff"/>
<rect x="693" y="255" width="1" height="21" fill="#0000ff"/>
<rect x="692" y="270" width="3" height="6" fill="#0000ff"/>
<rect x="701" y="253" width="1" height="20" fill="#0000ff"/>
<rect x="700" y="268" width="3" height="5" fill="#0000ff"/>
<rect x="709" y="251" width="1" height="20" fill="#0000ff"/>
<rect x="708" y="266" width="3" height="5" fill="#0000ff"/>
<rect x="717" y="250" width="1" height="19" fill="#0000ff"/>
<rect x="716" y="265" width="3" height="4" fill="#0000ff"/>
<rect x="725" y="248" width="1" height="20" fill="#0000ff"/>
<rect x="724" y="262" width="3" height="6" fill="#0000ff"/>
<rect x="733" y="245" width="1" height="21" fill="#0000ff"/>
<rect x="732" y="260" width="3" height="6" fill="#0000ff"/>
<rect x="741" y="244" width="1" height="20" fill="#0000ff"/>
<rect x="740" y="257" width="3" height="7" fill="#0000ff"/>
<rect x="749" y="241" width="1" height="20" fill="#0000ff"/>
<rect x="748" y="255" width="3" height="6" fill="#0000ff"/>
<rect x="757" y="239" width="1" height="20" fill="#0000ff"/>
<rect x="756" y="251" width="3" height="8" fill="#0000ff"/>
<rect x="765" y="232" width="1" height="24" fill="#0000ff"/>
<rect x="764" y="245" width="3" height="11" fill="#0000ff"/>
<rect x="773" y="226" width="1" height="25" fill="#0000ff"/>
<rect x="772" y="239" width="3" height="12" fill="#0000ff"/>
<rect x="781" y="218" width="1" height="27" fill="#0000ff"/>
<rect x="780" y="230" width="3" height="15" fill="#0000ff"/>
<rect x="789" y="212" width="1" height="26" fill="#0000ff"/>
<rect x="788" y="225" width="3" height="13" fill="#0000ff"/>
<rect x="797" y="206" width="1" height="25" fill="#0000ff"/>
<rect x="796" y="220" width="3" height="11" fill="#0000ff"/>
<rect x="805" y="200" width="1" height="26" fill="#0000ff"/>
<rect x="804" y="215" width="3" height="11" fill="#0000ff"/>
<rect x="813" y="193" width="1" height="28" fill="#0000ff"/>
<rect x="812" y="207" width="3" height="14" fill="#0000ff"/>
<rect x="821" y="184" width="1" height="30" fill="#0000ff"/>
<rect x="820" y="198" width="3" height="16" fill="#0000ff"/>
<rect x="829" y="176" width="1" height="30" fill="#0000ff"/>
<rect x="828" y="190" width="3" height="16" fill="#0000ff"/>
<rect x="837" y="169" width="1" height="30" fill="#0000ff"/>
<rect x="836" y="184" width="3" height="15" fill="#0000ff"/>
<rect x="845" y="162" width="1" height="30" fill="#0000ff"/>
<rect x="844" y="177" width="3" height="15" fill="#0000ff"/>
<rect x="853" y="155" width="1" height="29" fill="#0000ff"/>
<rect x="852" y="170" width="3" height="14" fill="#0000ff"/>
<rect x="861" y="147" width="1" height="30" fill="#0000ff"/>
<rect x="860" y="161" width="3" height="16" fill="#0000ff"/>
<rect x="869" y="140" width="1" height="30" fill="#0000ff"/>
<rect x="868" y="154" width="3" height="16" fill="#0000ff"/>
<rect x="877" y="135" width="1" height="28" fill="#0000ff"/>
<rect x="876" y="150" width="3" height="13" fill="#0000ff"/>
<rect x="885" y="131" width="1" height="26" fill="#0000ff"/>
<rect x="884" y="147" width="3" height="10" fill="#0000ff"/>
<rect x="893" y="130" width="1" height="23" fill="#0000ff"/>
<rect x="892" y="145" width="3" height="8" fill="#0000ff"/>
<rect x="901" y="128" width="1" height="21" fill="#0000ff"/>
<rect x="900" y="145" width="3" height="4" fill="#0000ff"/>
<rect x="909" y="130" width="1" height="17" fill="#0000ff"/>
<rect x="908" y="146" width="3" height="1" fill="#0000ff"/>
<rect x="917" y="135" width="1" height="17" fill="#ff0000"/>
<rect x="916" y="142" width="3" height="10" fill="#ff0000"/>
<rect x="925" y="140" width="1" height="16" fill="#ff0000"/>
<rect x="924" y="154" width="3" height="2" fill="#ff0000"/>
<rect x="933" y="147" width="1" height="12" fill="#ff0000"/>
<rect x="932" y="152" width="3" height="7" fill="#ff0000"/>
<rect x="941" y="147" width="1" height="15" fill="#ff0000"/>
<rect x="940" y="155" width="3" height="7" fill="#ff0000"/>
<rect x="949" y="148" width="1" height="16" fill="#ff0000"/>
<rect x="948" y="158" width="3" height="6" fill="#ff0000"/>
<rect x="957" y="151" width="1" height="14" fill="#ff0000"/>
<rect x="956" y="160" width="3" height="5" fill="#ff0000"/>
<rect x="965" y="154" width="1" height="13" fill="#ff0000"/>
<rect x="964" y="162" width="3" height="5" fill="#ff0000"/>
<rect x="973" y="154" width="1" height="14" fill="#ff0000"/>
<rect x="972" y="164" width="3" height="4" fill="#ff0000"/>
<polygon shape-rendering="auto" points="426,140 432,140 432,155 439,148 439,155 429,164 419,155 419,148 426,155" fill="#ff00ff"/>
<polygon shape-rendering="auto" points="922,132 928,132 928,147 935,140 935,147 925,156 915,147 915,140 922,147" fill="#ff00ff"/>
<polygon shape-rendering="auto" points="674,302 680,302 680,287 687,294 687,287 677,277 667,287 667,294 674,287" fill="#00ffff"/>
<polygon shape-rendering="auto" points="776,101 790,101 783,105" fill="#8090a0"/>
</g>
<rect x="4.5" y="100.5" width="975" height="290" fill="none" stroke="#ffffff" stroke-width="1"/>
<rect x="4.5" y="392.5" width="975" height="112" fill="none" stroke="#ffffff" stroke-width="1"/>
<rect x="4.5" y="507.5" width="975" height="140" fill="none" stroke="#ffffff" stroke-width="1"/>
<rect x="978" y="128" width="3" height="22" fill="#fff"/>
<rect x="980" y="119" width="3" height="1" fill="#fff"/>
<text transform="translate(984.5,122.64) scale(0.97,1)" font-size="9.6" fill="#fff" stroke="#fff" stroke-width="0.25" >134.032</text>
<rect x="980" y="152" width="3" height="1" fill="#fff"/>
<text transform="translate(984.5,155.64) scale(0.97,1)" font-size="9.6" fill="#fff" stroke="#fff" stroke-width="0.25" >133.992</text>
<rect x="980" y="186" width="3" height="1" fill="#fff"/>
<text transform="translate(984.5,189.64) scale(0.97,1)" font-size="9.6" fill="#fff" stroke="#fff" stroke-width="0.25" >133.952</text>
<rect x="980" y="219" width="3" height="1" fill="#fff"/>
<text transform="translate(984.5,222.64) scale(0.97,1)" font-size="9.6" fill="#fff" stroke="#fff" stroke-width="0.25" >133.912</text>
<rect x="980" y="252" width="3" height="1" fill="#fff"/>
<text transform="translate(984.5,255.64) scale(0.97,1)" font-size="9.6" fill="#fff" stroke="#fff" stroke-width="0.25" >133.872</text>
<rect x="980" y="285" width="3" height="1" fill="#fff"/>
<text transform="translate(984.5,288.64) scale(0.97,1)" font-size="9.6" fill="#fff" stroke="#fff" stroke-width="0.25" >133.832</text>
<rect x="980" y="318" width="3" height="1" fill="#fff"/>
<text transform="translate(984.5,321.64) scale(0.97,1)" font-size="9.6" fill="#fff" stroke="#fff" stroke-width="0.25" >133.792</text>
<rect x="980" y="352" width="3" height="1" fill="#fff"/>
<text transform="translate(984.5,355.64) scale(0.97,1)" font-size="9.6" fill="#fff" stroke="#fff" stroke-width="0.25" >133.752</text>
<rect x="980" y="385" width="3" height="1" fill="#fff"/>
<text transform="translate(984.5,388.64) scale(0.97,1)" font-size="9.6" fill="#fff" stroke="#fff" stroke-width="0.25" >133.712</text>
<polygon shape-rendering="auto" points="8,107 15,107 11.5,111" fill="#fff"/>
<text x="20" y="111.90" font-size="9.5" fill="#fff" >EURJPY,M1</text>
<g clip-path="url(#c2)">
<rect x="5" y="455" width="352" height="49" fill="#354b60"/>
<rect x="357" y="437" width="352" height="67" fill="#353f54"/>
<rect x="709" y="434" width="270" height="70" fill="#343541"/>
<line x1="6" y1="427.5" x2="979" y2="427.5" stroke="#ffa500" stroke-width="1" stroke-dasharray="3,3"/>
<line x1="6" y1="449.5" x2="979" y2="449.5" stroke="#ffa500" stroke-width="1" stroke-dasharray="3,3"/>
<line x1="6" y1="471.5" x2="979" y2="471.5" stroke="#ffa500" stroke-width="1" stroke-dasharray="3,3"/>
<polyline shape-rendering="crispEdges" points="5.5,460.75 13.5,455.75 21.5,458 29.5,453.75 37.5,463 45.5,463.75 53.5,463 61.5,470.75 69.5,471 77.5,459.5 85.5,461 93.5,458 101.5,461 109.5,457.5 117.5,455.5 125.5,460 133.5,449 141.5,445.75 149.5,444 157.5,445 165.5,443.75 173.5,438 181.5,438 189.5,434 197.5,426.75 205.5,427.5 213.5,431 221.5,435 229.5,436 237.5,430.5 245.5,431 253.5,428.75 261.5,430 269.5,435.75 277.5,435.75 285.5,433.25 293.5,428.25 301.5,433.75 309.5,433.25 317.5,428.75 325.5,424.5 333.5,421.25 341.5,421.25 349.5,423 357.5,423.25 365.5,423.25 373.5,425 381.5,427.5 389.5,435.75 397.5,440 405.5,439.25 413.5,447.5 421.5,448.25 429.5,449.25 437.5,450 445.5,442.5 453.5,441.75 461.5,456.25 469.5,466.25 477.5,465 485.5,469.5 493.5,462.5 501.5,461.25 509.5,457.5 517.5,457 525.5,454.5 533.5,454.5 541.5,457.5 549.5,459.25 557.5,460.75 565.5,463.75 573.5,454.5 581.5,457.5 589.5,449.5 597.5,449.25 605.5,450.75 613.5,456.25 621.5,458.25 629.5,454.5 637.5,456.75 645.5,453.75 653.5,455.75 661.5,449.5 669.5,446.25 677.5,442 685.5,441.25 693.5,443.25 701.5,448.75 709.5,451.25 717.5,445.75 725.5,441.75 733.5,445 741.5,443.25 749.5,438.75 757.5,435.75 765.5,432 773.5,431.25 781.5,428 789.5,435 797.5,434.5 805.5,432 813.5,428.75 821.5,426.25 829.5,428.75 837.5,433.25 845.5,429.5 853.5,428 861.5,427.5 869.5,429.5 877.5,432.5 885.5,437.5 893.5,440.5 901.5,448.75 909.5,453.75 917.5,457.5 925.5,452.5 933.5,452 941.5,448.25 949.5,448.75 957.5,447.5 965.5,448.75 973.5,445.5" fill="none" stroke="#ff00ff" stroke-width="1"/>
<polyline shape-rendering="crispEdges" points="5.5,455.5 13.5,455.75 21.5,456.75 29.5,455.75 37.5,458 45.5,459 53.5,460.75 61.5,462 69.5,464.5 77.5,463.25 85.5,463 93.5,462.5 101.5,461.75 109.5,461.25 117.5,460 125.5,460 133.5,458.25 141.5,455.75 149.5,453.75 157.5,452 165.5,450 173.5,448 181.5,445.75 189.5,443.75 197.5,439.25 205.5,436.25 213.5,435 221.5,435 229.5,435 237.5,434.25 245.5,433 253.5,432 261.5,432.5 269.5,433.25 277.5,433.75 285.5,433.25 293.5,432 301.5,433 309.5,433 317.5,431.25 325.5,429.5 333.5,427.5 341.5,426.75 349.5,426.25 357.5,425.5 365.5,425.5 373.5,425.5 381.5,425.5 389.5,428 397.5,430 405.5,432.5 413.5,436.25 421.5,439.25 429.5,441.25 437.5,443.25 445.5,443.25 453.5,442 461.5,445 469.5,448.75 477.5,452.5 485.5,455.75 493.5,458 501.5,459.25 509.5,459.25 517.5,458.25 525.5,457.5 533.5,457 541.5,457 549.5,458 557.5,459.25 565.5,460.75 573.5,458.25 581.5,458.25 589.5,456.75 597.5,454.5 605.5,454.5 613.5,455.75 621.5,456.25 629.5,455.5 637.5,455 645.5,455 653.5,455 661.5,453.75 669.5,452 677.5,450.75 685.5,449.25 693.5,447.5 701.5,447.5 709.5,448.75 717.5,447.5 725.5,446.25 733.5,445.75 741.5,444.5 749.5,443.25 757.5,442 765.5,439.5 773.5,437 781.5,435 789.5,434.5 797.5,434.5 805.5,433.75 813.5,432.5 821.5,432 829.5,431.25 837.5,431.25 845.5,430.5 853.5,429.5 861.5,429.5 869.5,430.75 877.5,433.25 885.5,435.75 893.5,437.5 901.5,439.5 909.5,442.5 917.5,445 925.5,447 933.5,448 941.5,448.75 949.5,448.75 957.5,448.75 965.5,448 973.5,447" fill="none" stroke="#00ffff" stroke-width="1"/>
<text transform="translate(165,486.77) scale(0.93,1)" font-size="28" fill="#0f800f" stroke="#0f800f" stroke-width="0.4">H4</text>
<text transform="translate(518,471.02) scale(0.93,1)" font-size="28" fill="#0f800f" stroke="#0f800f" stroke-width="0.4">H1</text>
<text transform="translate(860.5,467.77) scale(0.93,1)" font-size="28" fill="#0f800f" stroke="#0f800f" stroke-width="0.4">M30</text>
<text x="692" y="413.87" font-size="15" fill="#00ee00" >H4</text>
<text x="737" y="413.87" font-size="15" fill="#00ee00" >H1</text>
<text x="782" y="413.87" font-size="15" fill="#00ee00" >M30</text>
<text x="837" y="413.87" font-size="15" fill="#00ee00" >M15</text>
<text x="892" y="413.87" font-size="15" fill="#00ee00" >M5</text>
<text x="938" y="413.87" font-size="15" fill="#00ee00" >M1</text>
<text x="742" y="426.98" font-size="12.5" fill="#0f8f0f" >44.67</text>
<text x="781" y="426.98" font-size="12.5" fill="#0f8f0f" >60.39</text>
<text x="819" y="426.98" font-size="12.5" fill="#0f8f0f" >63.61</text>
<text x="857" y="426.98" font-size="12.5" fill="#0f8f0f" >62.75</text>
<text x="894" y="426.98" font-size="12.5" fill="#ff0000" >61.74</text>
<text x="934" y="426.98" font-size="12.5" fill="#ff0000" >39.81</text>
<text x="742" y="440.68" font-size="12.5" fill="#00ffff" >50.44</text>
<text x="781" y="440.68" font-size="12.5" fill="#00ffff" >62.92</text>
<text x="819" y="440.68" font-size="12.5" fill="#00ffff" >65.30</text>
<text x="857" y="440.68" font-size="12.5" fill="#00ffff" >62.78</text>
<text x="894" y="440.68" font-size="12.5" fill="#00ffff" >56.88</text>
<text x="934" y="440.68" font-size="12.5" fill="#00ffff" >34.78</text>
</g>
<text transform="translate(8.8,405.08) scale(0.951,1)" font-size="10" fill="#fff" stroke="#fff" stroke-width="0.25" >marsi-mtf&#160;&#160;RSI (14)&#160;&#160;MARSI(8) 34.7776 39.8145</text>
<rect x="980" y="394" width="2" height="1" fill="#fff"/>
<rect x="979" y="427" width="2" height="1" fill="#ffa500"/>
<rect x="979" y="449" width="2" height="1" fill="#ffa500"/>
<rect x="979" y="471" width="2" height="1" fill="#ffa500"/>
<text transform="translate(982.6,403.04) scale(0.97,1)" font-size="9.6" fill="#fff" stroke="#fff" stroke-width="0.25" >100</text>
<text transform="translate(982.6,430.24) scale(0.97,1)" font-size="9.6" fill="#fff" stroke="#fff" stroke-width="0.25" >70</text>
<text transform="translate(982.6,452.44) scale(0.97,1)" font-size="9.6" fill="#fff" stroke="#fff" stroke-width="0.25" >50</text>
<text transform="translate(982.6,474.14) scale(0.97,1)" font-size="9.6" fill="#fff" stroke="#fff" stroke-width="0.25" >30</text>
<text transform="translate(982.6,501.94) scale(0.97,1)" font-size="9.6" fill="#fff" stroke="#fff" stroke-width="0.25" >0</text>
<g clip-path="url(#c3)">
<line x1="6" y1="554.5" x2="979" y2="554.5" stroke="#c0c0c0" stroke-width="1" stroke-dasharray="3,3"/>
<line x1="6" y1="600.5" x2="979" y2="600.5" stroke="#c0c0c0" stroke-width="1" stroke-dasharray="3,3"/>
<polyline shape-rendering="crispEdges" points="5.5,597.5 13.5,590.75 21.5,603.75 29.5,600 37.5,608.75 45.5,605 53.5,598 61.5,627 69.5,633.75 77.5,601.25 85.5,615 93.5,607.5 101.5,616.25 109.5,605 117.5,594.5 125.5,608.75 133.5,587 141.5,587 149.5,563.75 157.5,560 165.5,560 173.5,523 181.5,517.5 189.5,523.75 197.5,500 205.5,500 213.5,500 221.5,516.25 229.5,518.75 237.5,500 245.5,500 253.5,500 261.5,510 269.5,523.75 277.5,524.25 285.5,528.25 293.5,521.75 301.5,538.75 309.5,564.5 317.5,548.75 325.5,528.75 333.5,509.5 341.5,508 349.5,520.5 357.5,518.25 365.5,523.25 373.5,518.25 381.5,512.5 389.5,527.5 397.5,541.25 405.5,556.25 413.5,560.5 421.5,567 429.5,586.25 437.5,631.25 445.5,627.5 453.5,623.75 461.5,646.25 469.5,655 477.5,655 485.5,655 493.5,639.5 501.5,629.5 509.5,620.5 517.5,620 525.5,605 533.5,604.5 541.5,611.25 549.5,610.5 557.5,631.25 565.5,635.5 573.5,598.75 581.5,576.25 589.5,565 597.5,543.75 605.5,561.25 613.5,581.25 621.5,591.25 629.5,586.25 637.5,598 645.5,588.75 653.5,582 661.5,572.5 669.5,558.75 677.5,543.75 685.5,558 693.5,547 701.5,581.25 709.5,585.5 717.5,566.25 725.5,542.5 733.5,546.25 741.5,549.5 749.5,535.5 757.5,533 765.5,515 773.5,519.5 781.5,519.5 789.5,541.25 797.5,553 805.5,531.25 813.5,500 821.5,500 829.5,521.25 837.5,537 845.5,521.25 853.5,519.5 861.5,518.75 869.5,533 877.5,560 885.5,558.25 893.5,565 901.5,570.75 909.5,575 917.5,603 925.5,602.5 933.5,608 941.5,595 949.5,589.5 957.5,601.25 965.5,616.25 973.5,611.25" fill="none" stroke="#1e90ff" stroke-width="1"/>
<polyline shape-rendering="crispEdges" points="5.5,607 13.5,607 21.5,607 29.5,607 37.5,607 45.5,607 53.5,607 61.5,611.25 69.5,618.25 77.5,617 85.5,617 93.5,617 101.5,617 109.5,617 117.5,610 125.5,610 133.5,603.25 141.5,603.25 149.5,578.75 157.5,576.25 165.5,576.25 173.5,539.25 181.5,534.5 189.5,534.5 197.5,520.5 205.5,520.5 213.5,519.25 221.5,519.25 229.5,519.25 237.5,510 245.5,510 253.5,510 261.5,510 269.5,510 277.5,510 285.5,512 293.5,512 301.5,523.75 309.5,547.5 317.5,547.5 325.5,542 333.5,525 341.5,524.25 349.5,524.25 357.5,524.25 365.5,524.25 373.5,524.25 381.5,524.25 389.5,524.25 397.5,528.25 405.5,541.25 413.5,545 421.5,551.25 429.5,573.75 437.5,615 445.5,615 453.5,615 461.5,627.5 469.5,641.25 477.5,641.25 485.5,642.5 493.5,642.5 501.5,642.5 509.5,636.25 517.5,635 525.5,620.5 533.5,620.5 541.5,620.5 549.5,620.5 557.5,620.5 565.5,620.5 573.5,613.75 581.5,592.5 589.5,578.75 597.5,559.25 605.5,559.25 613.5,563.75 621.5,575.5 629.5,575.5 637.5,582.5 645.5,582.5 653.5,582.5 661.5,582.5 669.5,576.25 677.5,559.25 685.5,559.25 693.5,559.25 701.5,565.5 709.5,570.5 717.5,570.5 725.5,558.25 733.5,558.25 741.5,558.25 749.5,550.75 757.5,548.75 765.5,530 773.5,530.5 781.5,530.5 789.5,530.5 797.5,537 805.5,537 813.5,523.75 821.5,519.5 829.5,519.5 837.5,520.5 845.5,520.5 853.5,520.5 861.5,520.5 869.5,520.5 877.5,544.25 885.5,544.25 893.5,548.75 901.5,554.25 909.5,558 917.5,587 925.5,587.5 933.5,592 941.5,592 949.5,592 957.5,592.5 965.5,600 973.5,600" fill="none" stroke="#ffff00" stroke-width="1"/>
<polygon shape-rendering="auto" points="5,640 5,647 11,647" fill="#8090a0"/>
</g>
<text transform="translate(8.5,519.88) scale(0.96,1)" font-size="10" fill="#fff" stroke="#fff" stroke-width="0.25" >StepRSI(14,1,0,7.0) 0.0000 7.0000</text>
<rect x="979" y="554" width="3" height="1" fill="#c0c0c0"/>
<rect x="979" y="600" width="3" height="1" fill="#c0c0c0"/>
<text transform="translate(982.6,518.04) scale(0.97,1)" font-size="9.6" fill="#fff" stroke="#fff" stroke-width="0.25" >80</text>
<text transform="translate(982.6,557.74) scale(0.97,1)" font-size="9.6" fill="#fff" stroke="#fff" stroke-width="0.25" >60</text>
<text transform="translate(982.6,603.44) scale(0.97,1)" font-size="9.6" fill="#fff" stroke="#fff" stroke-width="0.25" >40</text>
<text transform="translate(982.6,643.64) scale(0.97,1)" font-size="9.6" fill="#fff" stroke="#fff" stroke-width="0.25" >20</text>
<rect x="5" y="647" width="1" height="4" fill="#fff"/>
<text transform="translate(4.5,659.64) scale(0.96,1)" font-size="9.6" fill="#fff" stroke="#fff" stroke-width="0.25" >27 Jan 2015</text>
<rect x="69" y="647" width="1" height="4" fill="#fff"/>
<text transform="translate(68.5,659.64) scale(0.96,1)" font-size="9.6" fill="#fff" stroke="#fff" stroke-width="0.25" >27 Jan 19:44</text>
<rect x="133" y="647" width="1" height="4" fill="#fff"/>
<text transform="translate(132.5,659.64) scale(0.96,1)" font-size="9.6" fill="#fff" stroke="#fff" stroke-width="0.25" >27 Jan 19:52</text>
<rect x="197" y="647" width="1" height="4" fill="#fff"/>
<text transform="translate(196.5,659.64) scale(0.96,1)" font-size="9.6" fill="#fff" stroke="#fff" stroke-width="0.25" >27 Jan 20:00</text>
<rect x="261" y="647" width="1" height="4" fill="#fff"/>
<text transform="translate(260.5,659.64) scale(0.96,1)" font-size="9.6" fill="#fff" stroke="#fff" stroke-width="0.25" >27 Jan 20:08</text>
<rect x="325" y="647" width="1" height="4" fill="#fff"/>
<text transform="translate(324.5,659.64) scale(0.96,1)" font-size="9.6" fill="#fff" stroke="#fff" stroke-width="0.25" >27 Jan 20:16</text>
<rect x="389" y="647" width="1" height="4" fill="#fff"/>
<text transform="translate(388.5,659.64) scale(0.96,1)" font-size="9.6" fill="#fff" stroke="#fff" stroke-width="0.25" >27 Jan 20:24</text>
<rect x="453" y="647" width="1" height="4" fill="#fff"/>
<text transform="translate(452.5,659.64) scale(0.96,1)" font-size="9.6" fill="#fff" stroke="#fff" stroke-width="0.25" >27 Jan 20:32</text>
<rect x="517" y="647" width="1" height="4" fill="#fff"/>
<text transform="translate(516.5,659.64) scale(0.96,1)" font-size="9.6" fill="#fff" stroke="#fff" stroke-width="0.25" >27 Jan 20:40</text>
<rect x="581" y="647" width="1" height="4" fill="#fff"/>
<text transform="translate(580.5,659.64) scale(0.96,1)" font-size="9.6" fill="#fff" stroke="#fff" stroke-width="0.25" >27 Jan 20:48</text>
<rect x="645" y="647" width="1" height="4" fill="#fff"/>
<text transform="translate(644.5,659.64) scale(0.96,1)" font-size="9.6" fill="#fff" stroke="#fff" stroke-width="0.25" >27 Jan 20:56</text>
<rect x="709" y="647" width="1" height="4" fill="#fff"/>
<text transform="translate(708.5,659.64) scale(0.96,1)" font-size="9.6" fill="#fff" stroke="#fff" stroke-width="0.25" >27 Jan 21:04</text>
<rect x="773" y="647" width="1" height="4" fill="#fff"/>
<text transform="translate(772.5,659.64) scale(0.96,1)" font-size="9.6" fill="#fff" stroke="#fff" stroke-width="0.25" >27 Jan 21:12</text>
<rect x="837" y="647" width="1" height="4" fill="#fff"/>
<text transform="translate(836.5,659.64) scale(0.96,1)" font-size="9.6" fill="#fff" stroke="#fff" stroke-width="0.25" >27 Jan 21:20</text>
<rect x="901" y="647" width="1" height="4" fill="#fff"/>
<text transform="translate(900.5,659.64) scale(0.96,1)" font-size="9.6" fill="#fff" stroke="#fff" stroke-width="0.25" >27 Jan 21:28</text>
<rect x="965" y="647" width="1" height="4" fill="#fff"/>
<text transform="translate(964.5,659.64) scale(0.96,1)" font-size="9.6" fill="#fff" stroke="#fff" stroke-width="0.25" >27 Jan 21:36</text>
</svg>
<div class="a" style="left:0;top:665px;width:1024px;height:2px;background:#f8f8f8"></div>
<div class="a" style="left:0;top:667px;width:1024px;height:1px;background:#1e1e1e"></div>
<div class="a" style="left:0;top:668px;width:1024px;height:19px;background:#f0f0f0"></div>
<div class="a" style="left:0;top:668px;width:2px;height:19px;background:#a0a0a0"></div>
<div class="t" style="left:14.6px;top:670.28px;font-size:11px;color:#6d6d78;transform:scaleX(0.93);transform-origin:0 0;">EURUSD,M5</div>
<div class="t" style="left:94px;top:670.28px;font-size:11px;color:#6d6d78;transform:scaleX(0.93);transform-origin:0 0;">USDCHF,M5</div>
<div class="t" style="left:175.5px;top:670.28px;font-size:11px;color:#6d6d78;transform:scaleX(0.93);transform-origin:0 0;">GBPUSD,H1</div>
<div class="t" style="left:254.5px;top:670.28px;font-size:11px;color:#6d6d78;transform:scaleX(0.93);transform-origin:0 0;">EURCHF,M5</div>
<div class="t" style="left:334.5px;top:670.28px;font-size:11px;color:#6d6d78;transform:scaleX(0.93);transform-origin:0 0;">NZDUSD,M5</div>
<div class="t" style="left:414px;top:670.28px;font-size:11px;color:#6d6d78;transform:scaleX(0.93);transform-origin:0 0;">AUDUSD,M1</div>
<div class="t" style="left:494px;top:670.28px;font-size:11px;color:#6d6d78;transform:scaleX(0.93);transform-origin:0 0;">USDCAD,M5</div>
<div class="t" style="left:573.5px;top:670.28px;font-size:11px;color:#6d6d78;transform:scaleX(0.93);transform-origin:0 0;">EURJPY,M5</div>
<div class="a" style="left:85px;top:671px;width:1px;height:12px;background:#808080"></div>
<div class="a" style="left:165px;top:671px;width:1px;height:12px;background:#808080"></div>
<div class="a" style="left:245px;top:671px;width:1px;height:12px;background:#808080"></div>
<div class="a" style="left:325px;top:671px;width:1px;height:12px;background:#808080"></div>
<div class="a" style="left:405px;top:671px;width:1px;height:12px;background:#808080"></div>
<div class="a" style="left:485px;top:671px;width:1px;height:12px;background:#808080"></div>
<div class="a" style="left:564px;top:671px;width:1px;height:12px;background:#808080"></div>
<div class="a" style="left:640px;top:667px;width:76px;height:19px;background:#fff;border:1px solid #1e1e1e;border-top:0;border-right:2px solid #1e1e1e;border-bottom:2px solid #1e1e1e"></div>
<div class="t" style="left:649px;top:670.28px;font-size:11px;color:#000;transform:scaleX(0.93);transform-origin:0 0;">EURJPY,M1</div>
<svg class="a" style="left:994px;top:672px" width="6" height="9" viewBox="0 0 6 9"><path d="M5 0 V9 L0 4.5z" fill="#a0a0a0"/></svg>
<svg class="a" style="left:1011px;top:672px" width="6" height="9" viewBox="0 0 6 9"><path d="M0 0 V9 L5 4.5z" fill="#a0a0a0"/></svg>
<div class="a" style="left:0;top:687px;width:1024px;height:28px;background:#f0f0f0"></div>
<div class="a" style="left:0;top:687px;width:1024px;height:1px;background:#d8d8d8"></div>
<div class="a" style="left:15px;top:691px;width:1008px;height:22px;background:#fff;border:1px solid;border-color:#a0a0a0 #e8e8e8 #e8e8e8 #a0a0a0"></div>
<svg class="a" style="left:3px;top:693px" width="8" height="7" viewBox="0 0 8 7"><path d="M1 1 L7 6 M7 1 L1 6" stroke="#000" stroke-width="1.8"/></svg>
<div class="a" style="left:5px;top:703px;width:4px;height:1px;background:#a0a0a0"></div>
<div class="a" style="left:5px;top:705px;width:4px;height:1px;background:#a0a0a0"></div>
<div class="a" style="left:5px;top:707px;width:4px;height:1px;background:#a0a0a0"></div>
<div class="a" style="left:5px;top:709px;width:4px;height:1px;background:#a0a0a0"></div>
<svg class="a" style="left:20px;top:698px" width="9" height="9" viewBox="0 0 9 9"><circle cx="4.5" cy="4.5" r="3.6" fill="#b8b8b8" stroke="#707070"/><circle cx="3.8" cy="3.8" r="1.6" fill="#e0e0e0"/></svg>
<div class="t" style="left:35.2px;top:694.84px;font-size:12px;color:#000;transform:scaleX(0.937);transform-origin:0 0;">Balance: 52 002.93 USD&#160;&#160;Profit/Loss: 0.00&#160;&#160;Equity: 52 002.93&#160;&#160;Free margin: 52 002.93</div>
<div class="a" style="left:0;top:715px;width:1024px;height:23px;background:#f0f0f0"></div>
<div class="a" style="left:0;top:715px;width:1024px;height:1px;background:#c8c8c8"></div>
<div class="a" style="left:0;top:716px;width:1024px;height:1px;background:#fff"></div>
<div class="a" style="left:298px;top:721px;width:1px;height:16px;background:#a0a0a0"></div>
<div class="a" style="left:414px;top:721px;width:1px;height:16px;background:#a0a0a0"></div>
<div class="a" style="left:516px;top:721px;width:1px;height:16px;background:#a0a0a0"></div>
<div class="a" style="left:587px;top:721px;width:1px;height:16px;background:#a0a0a0"></div>
<div class="a" style="left:658px;top:721px;width:1px;height:16px;background:#a0a0a0"></div>
<div class="a" style="left:726px;top:721px;width:1px;height:16px;background:#a0a0a0"></div>
<div class="a" style="left:796px;top:721px;width:1px;height:16px;background:#a0a0a0"></div>
<div class="a" style="left:862px;top:721px;width:1px;height:16px;background:#a0a0a0"></div>
<div class="t" style="left:2px;top:723.18px;font-size:11px;color:#000;transform:scaleX(1.0);transform-origin:0 0;-webkit-text-stroke:0.2px #000;">For Help, press F1</div>
<div class="t" style="left:304px;top:723.18px;font-size:11px;color:#000;transform:scaleX(1.07);transform-origin:0 0;-webkit-text-stroke:0.2px #000;">Default</div>
<div class="t" style="left:419.5px;top:723.18px;font-size:11px;color:#000;transform:scaleX(0.97);transform-origin:0 0;-webkit-text-stroke:0.2px #000;">2015.01.27 20:48</div>
<div class="t" style="left:521.5px;top:723.18px;font-size:11px;color:#000;transform:scaleX(0.97);transform-origin:0 0;-webkit-text-stroke:0.2px #000;">O: 133.849</div>
<div class="t" style="left:592.5px;top:723.18px;font-size:11px;color:#000;transform:scaleX(0.97);transform-origin:0 0;-webkit-text-stroke:0.2px #000;">H: 133.855</div>
<div class="t" style="left:662.5px;top:723.18px;font-size:11px;color:#000;transform:scaleX(0.97);transform-origin:0 0;-webkit-text-stroke:0.2px #000;">L: 133.813</div>
<div class="t" style="left:732.5px;top:723.18px;font-size:11px;color:#000;transform:scaleX(0.97);transform-origin:0 0;-webkit-text-stroke:0.2px #000;">C: 133.826</div>
<div class="t" style="left:801px;top:723.18px;font-size:11px;color:#000;transform:scaleX(0.97);transform-origin:0 0;-webkit-text-stroke:0.2px #000;">V: 100</div>
<div class="t" style="left:937.5px;top:723.18px;font-size:11px;color:#000;transform:scaleX(1.07);transform-origin:0 0;-webkit-text-stroke:0.2px #000;">63/0 kb</div>
<svg class="a" style="left:868px;top:723px" width="24" height="12" viewBox="0 0 24 12"><rect x="0" y="0" width="2" height="8.8" fill="#4a7000"/><rect x="0" y="10" width="2" height="2" fill="#002a4a"/><rect x="3" y="0" width="2" height="7.8" fill="#4a7000"/><rect x="3" y="9" width="2" height="3" fill="#002a4a"/><rect x="6" y="0" width="2" height="6.8" fill="#4a7000"/><rect x="6" y="8" width="2" height="4" fill="#002a4a"/><rect x="9" y="0" width="2" height="5.8" fill="#4a7000"/><rect x="9" y="7" width="2" height="5" fill="#002a4a"/><rect x="12" y="0" width="2" height="4.8" fill="#4a7000"/><rect x="12" y="6" width="2" height="6" fill="#002a4a"/><rect x="15" y="0" width="2" height="3.8" fill="#4a7000"/><rect x="15" y="5" width="2" height="7" fill="#002a4a"/><rect x="18" y="0" width="2" height="2.7" fill="#4a7000"/><rect x="18" y="4" width="2" height="8" fill="#002a4a"/><rect x="21" y="0" width="2" height="1.7" fill="#4a7000"/><rect x="21" y="3" width="2" height="9" fill="#002a4a"/></svg>
<div class="a" style="left:0;top:738px;width:1024px;height:30px;background:linear-gradient(180deg,#1e2328 0px,#1e2328 1px,#9aa0a6 1px,#9aa0a6 2px,#343b43 2px,#1c1f23 6px,#1c1f23 100%)"></div>
<svg class="a" style="left:7px;top:732px" width="40" height="36" viewBox="0 0 40 36"><defs><linearGradient id="orbt" x1="0" y1="0" x2="0" y2="1"><stop offset="0" stop-color="#c8d4e0"/><stop offset=".45" stop-color="#7890a8"/><stop offset=".5" stop-color="#1e5a94"/><stop offset=".8" stop-color="#1a6ab0"/><stop offset="1" stop-color="#20c8f0"/></linearGradient></defs><circle cx="20" cy="20" r="18.3" fill="url(#orbt)" stroke="#12304a" stroke-width="1"/><path d="M11 9.5 q5 -3 10.8 -1 l-1.8 9 q-5 -2 -10.5 0.5z" fill="#f06020"/><path d="M21.5 17.5 q5 2 10.5 -1 l1.5 -6.5 q-5.5 2.5 -10.5 0.5z" fill="#80c040"/><path d="M8.5 18.5 q5 -2.5 10.5 -1 l-1.8 9.5 q-5 -2 -10.5 0.5z" fill="#40a0e8"/><path d="M18.8 27.5 q5 2 10.5 -1 l1.5 -6.5 q-5.5 2.5 -10.5 0.5z" fill="#f8c020"/></svg>
<div class="a" style="left:60px;top:739px;width:42px;height:28px;border:1px solid rgba(200,200,200,.55);border-radius:3px;background:linear-gradient(160deg,#4a4e54 0%,#2e3236 45%,#1e2226 46%,#24282c 100%)"></div><svg class="a" style="left:73px;top:744px" width="17" height="17" viewBox="0 0 17 17"><circle cx="8.5" cy="8.5" r="7.6" fill="#10a8e8"/><circle cx="4" cy="4" r="3.5" fill="#10a8e8"/><circle cx="13" cy="13" r="3.5" fill="#10a8e8"/><text x="4.3" y="13" font-family="Liberation Sans" font-weight="bold" font-size="12" fill="#fff">S</text></svg>
<div class="a" style="left:106px;top:739px;width:42px;height:28px;border:1px solid rgba(200,200,200,.55);border-radius:3px;background:linear-gradient(160deg,#4a4e54 0%,#2e3236 45%,#1e2226 46%,#24282c 100%)"></div><svg class="a" style="left:118px;top:744px" width="18" height="17" viewBox="0 0 18 17"><path d="M1 3 h6 l2 2 h8 v11 h-16z" fill="#f0d070"/><rect x="1" y="6" width="16" height="10" fill="#f8e8a0"/><rect x="4" y="9" width="10" height="7" fill="#4a9ad8"/><rect x="6" y="11" width="6" height="5" fill="#f8e8a0"/></svg>
<div class="a" style="left:152px;top:739px;width:42px;height:28px;border:1px solid rgba(200,200,200,.55);border-radius:3px;background:linear-gradient(160deg,#4a4e54 0%,#2e3236 45%,#1e2226 46%,#24282c 100%)"></div><svg class="a" style="left:165px;top:744px" width="17" height="18" viewBox="0 0 17 18"><path d="M6 1 h5 l5 14 h-15z" fill="#f08010"/><path d="M4.5 6 h8 l1 3 h-10z M2.8 11 h11.4 l1 3 h-13.4z" fill="#fff"/><rect x="0" y="15" width="17" height="3" fill="#e07010"/></svg>
<div class="a" style="left:198px;top:739px;width:42px;height:28px;border:1px solid rgba(200,200,200,.55);border-radius:3px;background:linear-gradient(160deg,#4a4e54 0%,#2e3236 45%,#1e2226 46%,#24282c 100%)"></div><svg class="a" style="left:211px;top:744px" width="18" height="18" viewBox="0 0 18 18"><circle cx="9" cy="9" r="8" fill="#e8701a"/><circle cx="9.5" cy="9" r="5" fill="#2a4a9a"/><path d="M2 6 q3 -6 10 -5 q-4 1 -5 4 q4 0 6 3 q-5 -1 -7 2 q1 4 6 5 q-9 1 -10 -9z" fill="#f8a020"/></svg>
<div class="a" style="left:244px;top:739px;width:42px;height:28px;border:1px solid rgba(200,200,200,.55);border-radius:3px;background:linear-gradient(160deg,#8a8e92 0%,#6a6e72 40%,#55595e 41%,#3a3e42 100%)"></div><svg class="a" style="left:257px;top:744px" width="17" height="17" viewBox="0 0 17 17"><circle cx="8.5" cy="8.5" r="8" fill="#12a012"/><text x="2.5" y="12" font-family="Liberation Serif" font-style="italic" font-size="10" fill="#fff">ee</text></svg>
<svg class="a" style="left:751px;top:744px" width="16" height="18" viewBox="0 0 16 18"><rect x="3" y="0" width="6" height="5" fill="#8a8a8a"/><rect x="2" y="5" width="8" height="8" fill="#6a6a6a"/><circle cx="11.5" cy="13" r="4.5" fill="#20a040"/><path d="M9 13 l2 2 l3 -4" stroke="#fff" stroke-width="1.4" fill="none"/></svg>
<svg class="a" style="left:774px;top:744px" width="16" height="18" viewBox="0 0 16 18"><path d="M8 0 v4 h5 v2 h-5" fill="#f0a020"/><path d="M1 8 l7 -4 l7 4 v8 h-14z" fill="#f09020"/><rect x="6" y="9" width="3" height="7" fill="#fff"/></svg>
<svg class="a" style="left:798px;top:744px" width="16" height="18" viewBox="0 0 16 18"><path d="M6 1 h4 l5 13 h-14z" fill="#f08010"/><path d="M4.5 6 h7 l1 3 h-9z M3 10.5 h10 l.8 2.5 h-11.6z" fill="#fff"/><rect x="0" y="14" width="16" height="3" fill="#e07010"/></svg>
<svg class="a" style="left:822px;top:745px" width="17" height="16" viewBox="0 0 17 16"><circle cx="8.5" cy="8" r="7" fill="#7ac020"/><circle cx="3.5" cy="3.5" r="3" fill="#7ac020"/><circle cx="13.5" cy="12.5" r="3" fill="#7ac020"/><path d="M5 8 l2.5 2.5 l4.5 -5" stroke="#fff" stroke-width="1.8" fill="none"/></svg>
<svg class="a" style="left:846px;top:743px" width="17" height="19" viewBox="0 0 17 19"><path d="M2 1 v16" stroke="#d0d0d0" stroke-width="1.5"/><path d="M3 2 h8 v7 h-8z" fill="#f0f0f0"/><circle cx="11.5" cy="13" r="4.5" fill="#d02020"/><path d="M9.5 11 l4 4 M13.5 11 l-4 4" stroke="#fff" stroke-width="1.4"/></svg>
<div class="t" style="left:870px;top:748.03px;font-size:10px;color:#9a9a9a;font-weight:bold;letter-spacing:-.5px">e/b</div>
<svg class="a" style="left:894px;top:743px" width="18" height="18" viewBox="0 0 18 18"><rect x="1" y="1" width="4" height="6" fill="none" stroke="#e0e0e0" stroke-width="1.3"/><rect x="5.5" y="5" width="11" height="9" fill="none" stroke="#e0e0e0" stroke-width="1.5"/><path d="M3 7 v8 h6 M9 14 v3" stroke="#e0e0e0" stroke-width="1.3" fill="none"/></svg>
<svg class="a" style="left:919px;top:745px" width="16" height="16" viewBox="0 0 16 16"><path d="M1 5 h3 l5 -4 v14 l-5 -4 h-3z" fill="#e8e8e8"/><path d="M11 5 q2 3 0 6" stroke="#a0a0a0" stroke-width="1.3" fill="none"/></svg>
<div class="t" style="left:964px;top:747.24px;font-size:12px;color:#fff;transform:scaleX(1.0);transform-origin:0 0;">3:02</div>
<div class="a" style="left:1009px;top:739px;width:15px;height:29px;border:1px solid #5a5e64;border-right:0;background:linear-gradient(180deg,#3a3e44,#15181c)"></div>
<div class="a" style="left:581px;top:613px;width:130px;height:50px;border:1px solid #767676;border-radius:2px;background:linear-gradient(180deg,#ffffff 0%,#e4e5f0 100%);box-shadow:1px 1px 2px rgba(0,0,0,.3)"></div>
<div class="t" style="left:587px;top:616.14px;font-size:12px;color:#575757;transform:scaleX(0.9);transform-origin:0 0;">StepRSI(14,1,0,7.0)</div>
<div class="t" style="left:587px;top:630.94px;font-size:12px;color:#575757;transform:scaleX(0.9);transform-origin:0 0;">Time: 2015.01.27 20:48</div>
<div class="t" style="left:587px;top:645.24px;font-size:12px;color:#575757;transform:scaleX(0.9);transform-origin:0 0;">Fast: 42.7817</div>
</body></html>
